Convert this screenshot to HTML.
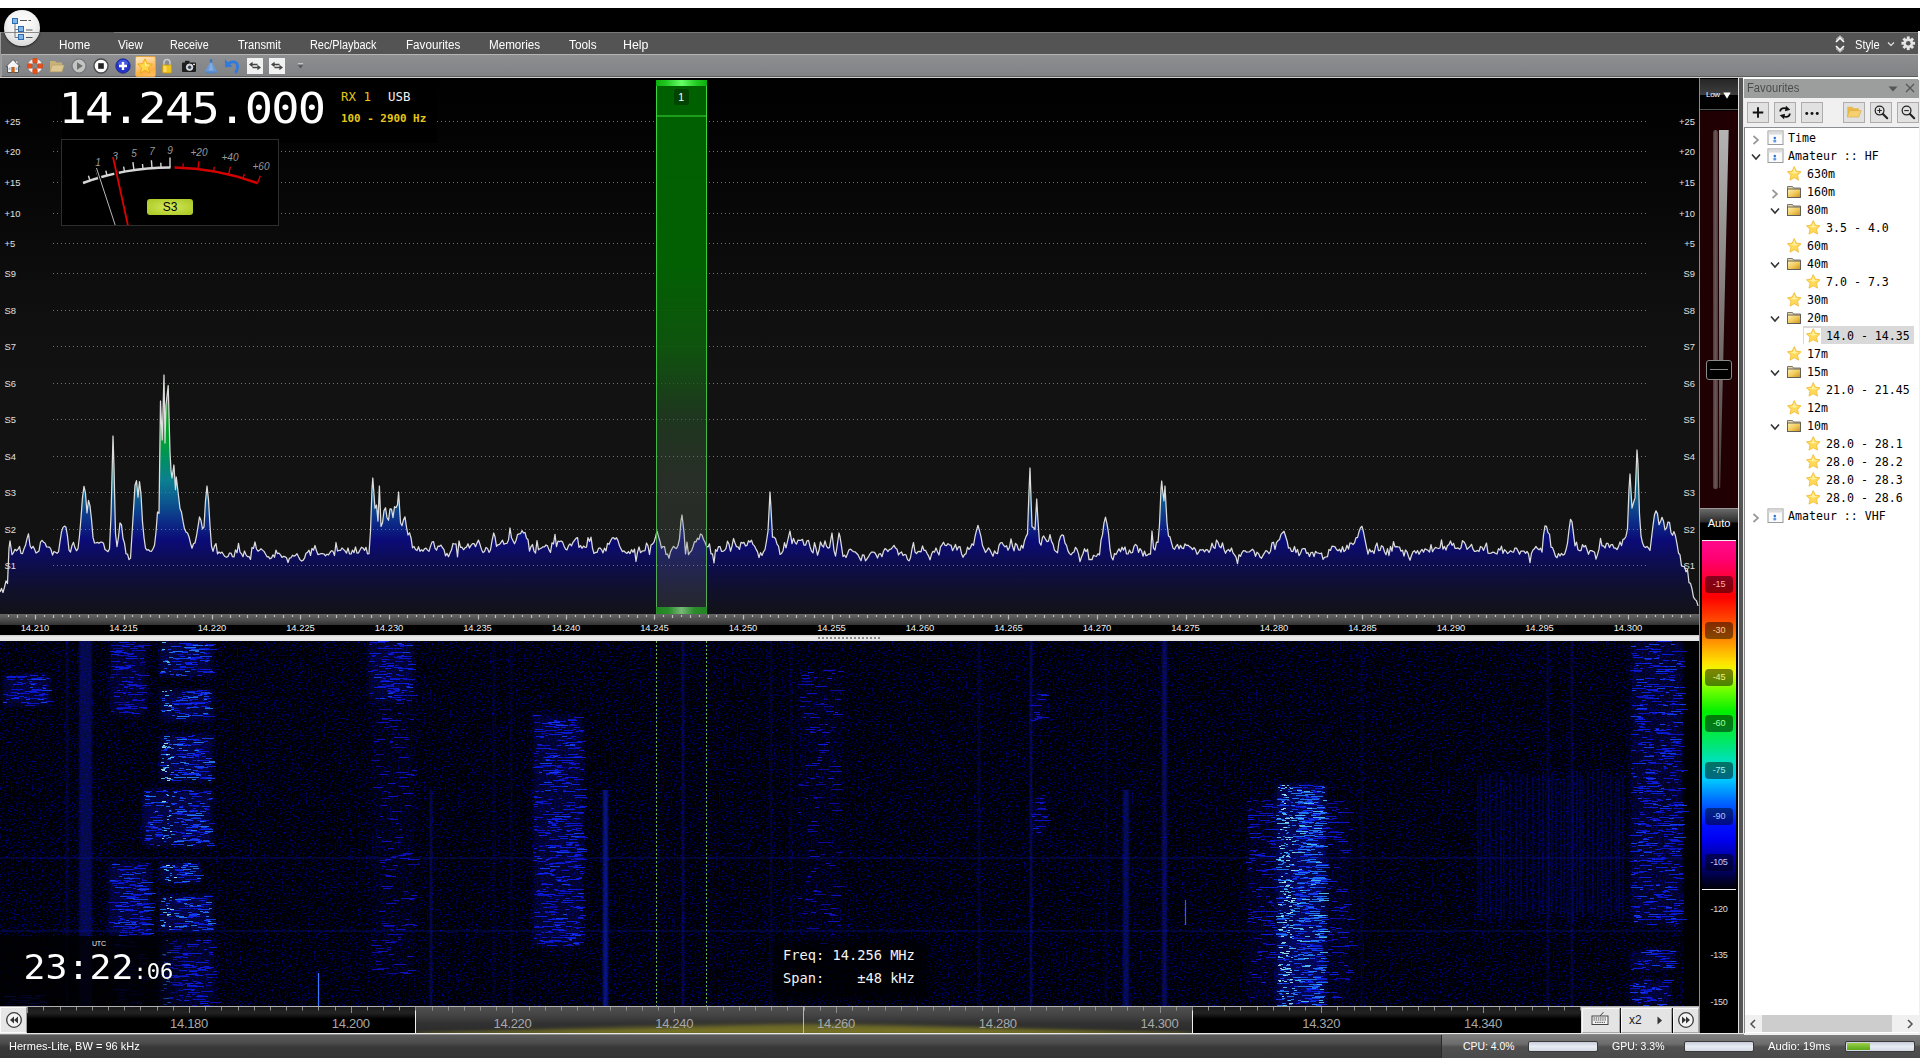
<!DOCTYPE html>
<html lang="en">
<head>
<meta charset="utf-8">
<title>SDR Console</title>
<style>
*{box-sizing:border-box;margin:0;padding:0}
html,body{width:1920px;height:1058px;overflow:hidden;background:#000}
body{position:relative;font-family:"Liberation Sans",sans-serif;font-size:12px;color:#fff}
.abs{position:absolute}
.mono{font-family:"DejaVu Sans Mono","Liberation Mono",monospace}
#topwhite{left:0;top:0;width:1920px;height:8px;background:#fff}
#menubar{left:0;top:32px;width:1918px;height:22px;background:#545454;border-top:1px solid #7a7a7a}
#menubar .hometab{left:36px;top:-1px;width:78px;height:22px;background:#545454}
#menubar span{position:absolute;top:5px;font-size:12px;line-height:14px;color:#fff;white-space:nowrap;transform-origin:0 0;transform:scaleX(.925)}
#leftedge{left:0;top:32px;width:1px;height:45px;background:#9a9a9a}
#toolbar{left:1px;top:54px;width:1917px;height:23px;background:linear-gradient(#8d8f91,#85878a 60%,#808284 100%);border-top:1px solid #b4b4b4;border-bottom:1px solid #5e5e5e;border-left:1px solid #a0a0a0}
#appbtn{left:4px;top:10px;width:36px;height:36px;border-radius:50%;background:radial-gradient(circle at 50% 35%,#fff 0%,#f2f2f2 45%,#c9c9c9 100%);box-shadow:0 1px 2px rgba(0,0,0,.6)}
.tbi{position:absolute;top:58px;width:16px;height:16px}
.gl{font-size:9.4px;color:#e0e0e0;line-height:12px;white-space:nowrap}
.rl{font-size:9.4px;color:#f0f0f0;width:60px;text-align:center;line-height:12px;white-space:nowrap}
.cbl{width:28px;height:17px;border-radius:4px;font-size:9px;line-height:17px;text-align:center;letter-spacing:-.2px}
.tr{font-size:11.6px;line-height:16px;color:#000;white-space:pre}
.nl{width:60px;text-align:center;font-size:13px;line-height:15px;color:#a8a8a8;white-space:nowrap;letter-spacing:-.3px}
</style>
</head>
<body>
<div id="topwhite" class="abs"></div>
<div id="menubar" class="abs">
<div class="abs hometab"></div>
<span style="left:59.1px;transform:scaleX(0.975)">Home</span>
<span style="left:117.8px;transform:scaleX(0.967)">View</span>
<span style="left:170.3px;transform:scaleX(0.892)">Receive</span>
<span style="left:237.7px;transform:scaleX(0.925)">Transmit</span>
<span style="left:310.0px;transform:scaleX(0.906)">Rec/Playback</span>
<span style="left:406.1px;transform:scaleX(0.971)">Favourites</span>
<span style="left:489.3px;transform:scaleX(0.970)">Memories</span>
<span style="left:568.7px;transform:scaleX(0.984)">Tools</span>
<span style="left:623.0px;transform:scaleX(1.031)">Help</span>
<span style="left:1855px">Style</span>
<svg class="abs" style="left:1833px;top:2px" width="14" height="18" viewBox="0 0 14 18"><path d="M3 7 L7 3 L11 7 M3 11 L7 15 L11 11" fill="none" stroke="#fff" stroke-width="1.6"/><path d="M3 4.5 L7 0.8 L11 4.5 M3 13.5 L7 17.2 L11 13.5" fill="none" stroke="#ddd" stroke-width="1"/></svg>
<svg class="abs" style="left:1887px;top:8px" width="8" height="6" viewBox="0 0 8 6"><path d="M1 1.5 L4 4.5 L7 1.5" fill="none" stroke="#e8e8e8" stroke-width="1.1"/></svg>
<svg class="abs" style="left:1901px;top:3px" width="14.5" height="14.5" viewBox="-8.5 -8.5 17 17"><g fill="#e6e6e6"><circle r="5.6"/><g id="gt"><rect x="-1.7" y="-8" width="3.4" height="16"/></g><use href="#gt" transform="rotate(45)"/><use href="#gt" transform="rotate(90)"/><use href="#gt" transform="rotate(135)"/></g><circle r="2.7" fill="#545454"/></svg>
</div>
<div id="leftedge" class="abs"></div>
<div class="abs" style="left:1918px;top:31px;width:2px;height:49px;background:#fff;z-index:3"></div>
<div class="abs" style="left:0;top:77px;width:1743px;height:1px;background:#cfcfcf;z-index:3"></div>
<div id="toolbar" class="abs"></div>
<div id="appbtn" class="abs">
<svg width="36" height="36" viewBox="0 0 36 36"><path d="M0.8 22.5 H35.2" stroke="#8a8a8a" stroke-width="1"/><path d="M11 13 V27.5 H15 M11 19.5 H15" fill="none" stroke="#777" stroke-width="1"/><g fill="#7fb6e6" stroke="#2a6db3" stroke-width="1"><rect x="8.5" y="8.5" width="5" height="5"/><rect x="14.5" y="16.5" width="5" height="5"/><rect x="14.5" y="24.5" width="5" height="5"/></g><path d="M16 10.5 H23 M24.5 10.5 H27 M22 20 H28.5 M22 27.5 H28.5" stroke="#555" stroke-width="1"/></svg>
</div>
<!-- toolbar icons -->
<svg class="tbi" style="left:5px" viewBox="0 0 16 16"><path d="M1 8.5 L8 1.5 L15 8.5 H13.5 V14.5 H2.5 V8.5 Z" fill="#f4f4f4" stroke="#555" stroke-width="1"/><rect x="6.3" y="9" width="3.4" height="5.5" fill="#c8641e"/><rect x="3.5" y="9.5" width="2" height="2.5" fill="#9cc3e8"/><rect x="10.5" y="9.5" width="2" height="2.5" fill="#9cc3e8"/><rect x="11" y="2.5" width="1.8" height="3" fill="#eee" stroke="#666" stroke-width=".5"/></svg>
<svg class="tbi" style="left:27px" viewBox="0 0 16 16"><circle cx="8" cy="8" r="5.3" fill="none" stroke="#f0f0f0" stroke-width="3.6"/><g fill="#e8501a" stroke="#c43c0c" stroke-width=".5"><rect x="5.7" y="0.3" width="4.6" height="4.8" rx="1"/><rect x="5.7" y="10.9" width="4.6" height="4.8" rx="1"/><rect x="0.3" y="5.7" width="4.8" height="4.6" rx="1"/><rect x="10.9" y="5.7" width="4.8" height="4.6" rx="1"/></g></svg>
<svg class="tbi" style="left:49px" viewBox="0 0 16 16"><path d="M1 3 H6 L7.5 4.5 H13 V13.5 H1 Z" fill="#c9b27a"/><path d="M3.2 7 H15.2 L13 13.8 H1 Z" fill="#dcc791" stroke="#b39c62" stroke-width=".6"/></svg>
<svg class="tbi" style="left:71px" viewBox="0 0 16 16"><circle cx="8" cy="8" r="7" fill="#c4c4c4" stroke="#737373" stroke-width="1.2"/><path d="M6 4.2 L11.8 8 L6 11.8 Z" fill="#6e6e6e"/></svg>
<svg class="tbi" style="left:93px" viewBox="0 0 16 16"><circle cx="8" cy="8" r="7" fill="#fdfdfd" stroke="#4a4a4a" stroke-width="1.4"/><rect x="5.2" y="5.2" width="5.6" height="5.6" fill="#222"/></svg>
<svg class="tbi" style="left:115px" viewBox="0 0 16 16"><circle cx="8" cy="8" r="7.2" fill="#2433c8" stroke="#1a2590" stroke-width=".8"/><ellipse cx="8" cy="5" rx="5" ry="3" fill="#5f74ee" opacity=".6"/><path d="M8 4 V12 M4 8 H12" stroke="#fff" stroke-width="2.4"/></svg>
<div class="abs" style="left:134.5px;top:55.5px;width:21px;height:21px;background:linear-gradient(160deg,#ffe9c4 0%,#ffd08a 35%,#fcb044 70%,#fdc060 100%);border:1px solid #e0a040;border-radius:2px"></div>
<svg class="tbi" style="left:137px" viewBox="0 0 16 16"><path d="M8 0.8 L10.2 5.6 L15.4 6.2 L11.5 9.8 L12.6 15 L8 12.3 L3.4 15 L4.5 9.8 L0.6 6.2 L5.8 5.6 Z" fill="#ffd84a" stroke="#e9a21c" stroke-width=".9"/><path d="M8 3 L9.4 6.5 L12.8 6.9 L8 8 Z" fill="#fff3a8"/></svg>
<svg class="tbi" style="left:159px" viewBox="0 0 16 16"><path d="M5 7 V4.5 A3 3 0 0 1 11 4.5 V7" fill="none" stroke="#c9c9c9" stroke-width="1.6"/><rect x="3.5" y="7" width="9" height="8" rx="1" fill="#f0c21c" stroke="#c99a10" stroke-width=".7"/><rect x="4.5" y="8" width="3" height="6" fill="#f9dc5c"/></svg>
<svg class="tbi" style="left:181px" viewBox="0 0 16 16"><rect x="1" y="4.5" width="14" height="9.5" rx="1" fill="#1c1c1c"/><rect x="4" y="2.8" width="4.5" height="2.2" fill="#1c1c1c"/><circle cx="8.6" cy="9.2" r="3.3" fill="#cfd6de" stroke="#eee" stroke-width=".7"/><circle cx="8.6" cy="9.2" r="1.7" fill="#3a4450"/><rect x="12" y="5.8" width="2" height="1.3" fill="#ddd"/></svg>
<svg class="tbi" style="left:203px" viewBox="0 0 16 16"><ellipse cx="8" cy="13.6" rx="6.3" ry="1.8" fill="#4f86cc"/><path d="M6.9 4.5 H9.1 L14.2 13.4 H1.8 Z" fill="#6a9ad6"/><path d="M7.4 5 H8.6 L10.5 12.5 H5.5 Z" fill="#8eb4e4" opacity=".7"/><rect x="6.8" y="1" width="2.4" height="3.8" rx="1.1" fill="#3f74be"/></svg>
<svg class="tbi" style="left:224px" viewBox="0 0 16 16"><path d="M4.5 5.8 C8 2.2 14 3.6 13.6 9.2 C13.4 12 12.2 13.9 11 15" fill="none" stroke="#2f7ae0" stroke-width="2.7" stroke-linecap="butt"/><path d="M0.8 1.2 L1.2 9.4 L8.6 8.6 Z" fill="#2f7ae0"/></svg>
<div class="abs" style="left:247px;top:58px;width:16px;height:16px;background:#f1f1f1"></div>
<svg class="tbi" style="left:247px" viewBox="0 0 16 16"><path d="M4 6.5 H10.5 M5.5 9.5 H12" fill="none" stroke="#444" stroke-width="1.5"/><path d="M2 6.5 L5.6 3.8 V9.2 Z M14 9.5 L10.4 6.8 V12.2 Z" fill="#444"/></svg>
<div class="abs" style="left:269px;top:58px;width:16px;height:16px;background:#f1f1f1"></div>
<svg class="tbi" style="left:269px" viewBox="0 0 16 16"><path d="M4 6.5 H10.5 M5.5 9.5 H12" fill="none" stroke="#444" stroke-width="1.5"/><path d="M2 6.5 L5.6 3.8 V9.2 Z M14 9.5 L10.4 6.8 V12.2 Z" fill="#444"/></svg>
<svg class="abs" style="left:297px;top:62px" width="7" height="8" viewBox="0 0 8 8"><path d="M1 1.3 H7" stroke="#d8d8d8" stroke-width="1"/><path d="M1 3.2 H7 L4 6.8 Z" fill="#555"/></svg>
<div id="spec" class="abs" style="left:0;top:77px;width:1699px;height:537px;background:linear-gradient(#000 0%,#060606 20%,#0e0e0e 40%,#121212 55%,#121212 100%);overflow:hidden">
<svg class="abs" style="left:0;top:0" width="1699" height="537" viewBox="0 0 1699 537">
<defs><linearGradient id="sg" gradientUnits="userSpaceOnUse" x1="0" y1="293" x2="0" y2="537">
<stop offset="0.0000" stop-color="#10c010"/>
<stop offset="0.1230" stop-color="#00aa10"/>
<stop offset="0.2869" stop-color="#00a030"/>
<stop offset="0.3607" stop-color="#009060"/>
<stop offset="0.4508" stop-color="#0c8090"/>
<stop offset="0.5328" stop-color="#0c5a90"/>
<stop offset="0.6148" stop-color="#0c3088"/>
<stop offset="0.6967" stop-color="#0b0b78"/>
<stop offset="0.7992" stop-color="#0d0d4c"/>
<stop offset="0.9016" stop-color="#10102c"/>
<stop offset="1.0000" stop-color="#121218"/>
</linearGradient></defs>
<polygon points="0,537 0.0,514.9 1.5,511.4 3.0,515.5 4.5,510.2 6.0,503.8 7.5,506.5 9.0,471.1 10.0,463.8 12.0,477.6 13.5,475.6 15.0,472.3 16.5,473.8 18.0,472.3 19.5,469.5 21.0,476.4 22.5,476.6 24.0,471.7 25.5,468.3 27.0,461.6 28.5,456.8 30.0,468.5 31.5,471.5 33.0,469.3 34.5,472.1 36.0,476.0 37.5,475.1 39.0,473.9 40.5,465.1 42.0,463.3 43.5,465.2 45.0,466.0 46.5,469.8 48.0,470.0 49.5,470.0 51.0,472.5 52.5,478.1 54.0,474.5 55.5,475.2 57.0,476.3 58.5,474.9 60.0,464.7 61.5,454.9 63.0,450.4 64.5,449.1 66.0,450.3 67.5,459.4 69.0,473.0 70.5,475.0 72.0,468.4 73.5,465.3 75.0,470.8 76.5,473.8 78.0,471.7 79.5,458.7 81.0,440.9 82.5,420.3 84.0,409.3 85.5,416.2 87.0,435.9 88.5,423.4 90.0,428.9 91.5,442.5 93.0,460.4 94.5,466.0 96.0,465.8 97.5,465.3 99.0,466.3 100.5,465.2 102.0,465.2 103.5,466.3 105.0,472.5 106.5,473.5 108.0,474.7 109.5,471.7 111.0,438.9 113.0,359.0 114.0,389.7 115.5,456.8 117.0,469.7 118.5,460.0 120.0,445.9 121.5,447.9 123.0,461.5 124.5,466.1 126.0,476.8 127.5,477.0 129.0,482.6 130.5,481.1 132.0,457.3 133.5,433.0 135.0,408.3 136.5,403.6 138.0,420.2 139.5,404.6 141.0,417.3 142.5,444.9 144.0,460.5 145.5,471.1 147.0,473.1 148.5,472.7 150.0,474.2 151.5,474.3 153.0,471.7 154.5,468.2 156.0,455.0 157.5,435.0 159.0,436.4 160.5,324.0 162.2,363.0 164.0,298.0 165.0,366.1 166.0,328.0 168.2,308.5 170.0,375.0 171.0,393.6 172.0,401.0 173.9,388.0 175.5,412.7 176.3,400.0 178.5,418.7 180.0,431.6 181.5,435.3 183.0,444.2 184.5,451.8 186.0,455.0 187.5,456.0 189.0,459.8 190.5,466.2 192.0,471.2 193.5,466.8 195.0,465.9 196.5,459.0 198.0,449.7 199.5,439.9 201.0,443.6 202.5,451.9 204.0,449.9 205.5,423.7 207.0,409.0 208.5,422.9 210.0,448.8 211.5,469.3 213.0,474.3 214.5,469.1 216.0,466.6 217.5,476.9 219.0,475.0 220.5,476.3 222.0,475.1 223.5,477.5 225.0,479.5 226.5,480.3 228.0,479.4 229.5,476.0 231.0,476.0 232.5,479.7 234.0,479.9 235.5,472.8 237.0,475.8 238.5,466.4 240.0,475.1 241.5,476.8 243.0,479.7 244.5,474.0 246.0,477.9 247.5,479.6 249.0,479.5 250.5,482.4 252.0,470.4 253.5,471.4 255.0,465.0 256.5,472.0 258.0,474.1 259.5,473.2 261.0,471.8 262.5,473.1 264.0,474.4 265.5,477.0 267.0,479.8 268.5,479.6 270.0,481.8 271.5,480.9 273.0,477.8 274.5,480.3 276.0,473.2 277.5,476.7 279.0,476.2 280.5,477.9 282.0,480.4 283.5,479.3 285.0,479.7 286.5,480.8 288.0,485.5 289.5,481.0 291.0,480.8 292.5,478.2 294.0,479.2 295.5,478.4 297.0,476.7 298.5,479.8 300.0,482.6 301.5,484.0 303.0,483.4 304.5,481.2 306.0,476.2 307.5,475.4 309.0,473.2 310.5,478.5 312.0,471.5 313.5,473.2 315.0,468.5 316.5,473.8 318.0,477.7 319.5,477.2 321.0,476.5 322.5,476.7 324.0,477.0 325.5,478.9 327.0,477.2 328.5,477.9 330.0,475.5 331.5,473.7 333.0,474.4 334.5,478.5 336.0,465.5 337.5,474.0 339.0,473.4 340.5,473.5 342.0,471.0 343.5,472.4 345.0,473.9 346.5,476.1 348.0,471.0 349.5,476.8 351.0,477.0 352.5,473.2 354.0,475.6 355.5,470.0 357.0,476.1 358.5,475.9 360.0,473.0 361.5,470.2 363.0,471.0 364.5,473.4 366.0,470.4 367.5,476.9 369.0,476.7 370.5,454.3 372.0,411.9 372.8,401.0 375.0,431.3 376.5,428.0 378.0,444.1 379.4,409.0 381.0,449.4 382.5,445.8 384.0,433.6 385.5,430.7 387.0,440.7 388.5,443.3 390.0,431.9 391.5,432.1 393.0,440.7 394.5,429.7 396.0,430.6 397.5,427.7 398.6,415.0 400.5,445.7 402.0,448.7 403.5,442.9 405.0,439.9 406.5,450.2 408.0,458.0 409.5,455.8 411.0,460.7 412.5,470.9 414.0,469.4 415.5,472.6 417.0,473.6 418.5,469.7 420.0,474.3 421.5,472.6 423.0,474.2 424.5,471.8 426.0,471.2 427.5,473.1 429.0,474.4 430.5,469.1 432.0,465.1 433.5,464.6 435.0,471.1 436.5,473.2 438.0,469.1 439.5,469.3 441.0,468.1 442.5,470.7 444.0,472.7 445.5,478.8 447.0,476.4 448.5,479.7 450.0,476.1 451.5,472.8 453.0,466.5 454.5,467.0 456.0,466.9 457.5,479.8 459.0,464.0 460.5,470.3 462.0,470.2 463.5,472.8 465.0,470.8 466.5,470.1 468.0,466.7 469.5,471.0 471.0,468.4 472.5,466.7 474.0,466.6 475.5,469.7 477.0,466.1 478.5,463.1 480.0,467.5 481.5,472.4 483.0,475.6 484.5,474.5 486.0,470.4 487.5,471.4 489.0,475.3 490.5,473.0 492.0,463.9 493.7,456.0 495.0,459.8 496.5,469.3 498.0,467.8 499.5,467.3 501.0,465.5 502.5,463.2 504.0,467.3 505.5,466.5 507.0,466.3 508.5,463.0 510.0,451.0 511.5,460.8 513.0,463.7 514.5,466.8 516.0,463.5 517.5,457.6 519.0,456.9 520.5,456.7 522.0,453.7 523.5,455.9 525.0,455.5 526.5,461.1 528.0,462.7 529.5,474.1 531.0,469.5 532.5,467.5 534.0,474.0 535.5,476.1 537.0,463.6 538.5,472.9 540.0,471.6 541.5,471.0 543.0,469.8 544.5,469.9 546.0,468.0 547.5,468.9 549.0,472.9 550.5,475.4 552.0,465.8 553.5,466.9 555.0,457.4 556.5,469.7 558.0,464.1 559.5,464.6 561.0,464.0 562.5,464.9 564.0,468.9 565.5,472.1 567.0,472.9 568.5,468.7 570.0,466.9 571.5,468.8 573.0,465.3 574.5,463.3 576.0,461.4 577.5,460.6 579.0,470.4 580.5,468.6 582.0,471.3 583.5,469.1 585.0,470.3 586.5,470.1 588.0,460.6 589.5,464.5 591.0,460.2 592.5,471.1 594.0,476.5 595.5,475.4 597.0,475.5 598.5,471.4 600.0,470.9 601.5,472.6 603.0,475.9 604.5,471.1 606.0,474.0 607.5,466.3 609.0,467.3 610.5,464.0 612.0,461.2 613.5,460.6 615.0,462.2 616.5,460.8 618.0,463.6 619.5,468.7 621.0,471.9 622.5,474.6 624.0,473.8 625.5,475.5 627.0,476.4 628.5,474.5 630.0,476.6 631.5,472.6 633.0,475.3 634.5,472.1 636.0,484.5 637.5,475.3 639.0,469.9 640.5,475.7 642.0,474.1 643.5,473.8 645.0,473.6 646.5,466.0 648.0,468.8 649.5,477.5 651.0,468.0 652.5,467.1 654.0,465.2 655.5,460.1 657.0,454.0 658.5,459.4 660.0,464.4 661.5,471.2 663.0,469.5 664.5,469.6 666.0,477.5 667.5,477.0 669.0,481.2 670.5,474.7 672.0,471.8 673.5,469.3 675.0,470.9 676.5,471.5 678.0,468.5 679.5,461.9 681.0,443.6 682.0,438.0 684.0,455.3 685.5,476.9 687.0,465.1 688.5,477.6 690.0,475.2 691.5,473.9 693.0,469.8 694.5,464.7 696.0,464.8 697.5,461.2 699.0,462.4 700.5,456.9 702.0,457.9 703.5,462.5 705.0,465.2 706.5,469.4 708.0,469.9 709.5,466.8 711.0,476.9 712.5,476.8 714.0,486.0 715.5,472.7 717.0,474.3 718.5,469.5 720.0,469.5 721.5,474.3 723.0,474.3 724.5,473.5 726.0,471.3 727.5,464.2 729.0,467.3 730.5,474.2 732.0,469.1 733.5,461.5 735.0,466.0 736.5,469.7 738.0,469.9 739.5,472.4 741.0,465.3 742.5,466.1 744.0,465.4 745.5,469.0 747.0,468.4 748.5,463.7 750.0,465.2 751.5,463.2 753.0,467.6 754.5,468.9 756.0,472.1 757.5,474.9 759.0,480.6 760.5,475.6 762.0,478.4 763.5,474.8 765.0,472.5 766.5,464.0 768.0,454.1 770.0,415.0 771.0,431.3 772.5,460.1 774.0,460.1 775.5,461.7 777.0,467.2 778.5,469.1 780.0,477.4 781.5,476.4 783.0,474.0 784.5,465.7 786.0,470.8 787.5,464.3 789.0,457.9 790.0,454.0 792.0,466.7 793.5,461.4 795.0,465.4 796.5,467.1 798.0,463.1 799.5,463.4 801.0,463.3 802.5,462.4 804.0,468.2 805.5,468.2 807.0,463.8 808.5,463.4 810.0,469.7 811.5,474.1 813.0,475.9 814.5,465.6 816.0,471.4 817.5,478.2 819.0,473.3 820.5,464.9 822.0,468.4 823.5,470.1 825.0,463.9 826.5,469.2 828.0,471.2 829.5,470.7 831.0,461.3 832.0,456.0 834.0,473.6 835.5,479.2 837.0,469.9 839.0,456.0 840.0,459.7 841.5,469.4 843.0,479.5 844.5,478.1 846.0,480.5 847.5,476.8 849.0,472.8 850.5,472.1 852.0,473.5 853.5,474.7 855.0,474.8 856.5,476.3 858.0,477.8 859.5,480.9 861.0,483.8 862.5,477.8 864.0,478.1 865.5,483.9 867.0,481.8 868.5,479.7 870.0,476.8 871.5,475.1 873.0,475.2 874.5,475.3 876.0,477.7 877.5,481.0 879.0,477.0 880.5,476.7 882.0,479.7 883.5,474.3 885.0,471.6 886.5,472.5 888.0,474.5 889.5,472.3 891.0,472.2 892.5,470.3 894.0,468.3 895.5,471.1 897.0,472.2 898.5,478.0 900.0,475.9 901.5,474.9 903.0,478.6 904.5,477.5 906.0,477.9 907.5,482.6 909.0,483.9 910.5,480.7 912.0,472.0 913.5,465.5 915.0,475.0 916.5,476.6 918.0,474.7 919.5,474.3 921.0,474.8 922.5,468.9 924.0,473.3 925.5,473.3 927.0,476.3 928.5,478.9 930.0,482.8 931.5,477.3 933.0,474.3 934.5,475.1 936.0,471.0 937.5,474.9 939.0,478.0 940.5,469.9 942.0,467.9 943.5,465.2 945.0,468.3 946.5,468.6 948.0,466.6 949.5,467.9 951.0,468.1 952.5,473.7 954.0,470.8 955.5,467.4 957.0,473.1 958.5,469.8 960.0,469.6 961.5,476.7 963.0,480.3 964.5,477.6 966.0,476.7 967.5,470.1 969.0,472.4 970.5,470.6 972.0,466.8 973.5,468.4 975.0,459.7 976.5,453.4 978.0,448.3 979.5,453.8 981.0,459.7 982.5,468.5 984.0,471.8 985.5,475.5 987.0,473.4 988.5,470.9 990.0,472.9 991.5,476.3 993.0,479.2 994.5,473.8 996.0,476.2 997.5,476.7 999.0,468.4 1000.5,465.9 1002.0,465.5 1003.5,468.2 1005.0,469.9 1006.5,468.6 1008.0,473.2 1009.5,470.3 1011.0,461.8 1012.5,469.0 1014.0,473.9 1015.5,466.3 1017.0,468.0 1018.5,472.9 1020.0,473.2 1021.5,468.3 1023.0,471.1 1024.5,463.7 1026.0,459.6 1027.5,456.9 1029.0,413.9 1030.0,391.0 1032.0,449.7 1033.5,450.6 1035.0,452.6 1036.7,422.0 1038.0,444.1 1039.5,465.5 1041.0,468.2 1042.5,460.3 1043.7,459.0 1045.5,462.2 1047.0,464.6 1048.5,464.2 1050.0,457.6 1051.5,464.4 1053.0,467.1 1054.5,473.1 1056.0,474.6 1057.5,475.8 1059.0,464.5 1060.5,459.7 1062.0,457.8 1063.5,458.6 1065.0,466.2 1066.5,468.4 1068.0,473.9 1069.5,476.6 1071.0,477.9 1072.5,475.8 1074.0,475.0 1075.5,470.3 1077.0,472.4 1078.5,476.9 1080.0,484.6 1081.5,480.0 1083.0,476.7 1084.5,471.7 1086.0,474.7 1087.5,472.2 1089.0,482.6 1090.5,482.3 1092.0,482.7 1093.5,478.3 1095.0,479.0 1096.5,479.3 1098.0,476.7 1099.5,477.9 1101.0,463.1 1102.5,457.7 1104.0,445.9 1105.5,440.2 1107.0,446.9 1108.5,456.2 1110.0,472.2 1111.5,480.2 1113.0,482.9 1114.5,476.5 1116.0,477.5 1117.5,474.4 1119.0,471.9 1120.5,474.8 1122.0,470.2 1123.5,473.1 1125.0,470.0 1126.5,476.8 1128.0,477.0 1129.5,473.0 1131.0,476.0 1132.5,475.5 1134.0,469.4 1135.5,467.4 1137.0,468.9 1138.5,475.4 1140.0,471.6 1141.5,473.8 1143.0,479.2 1144.5,474.2 1146.0,478.8 1147.5,478.1 1149.0,476.8 1150.5,477.2 1152.0,454.0 1153.5,471.1 1155.0,473.0 1156.5,465.2 1158.0,465.3 1159.5,447.5 1161.0,411.9 1161.7,404.0 1162.5,412.8 1164.0,423.8 1165.0,409.0 1167.0,446.0 1168.5,459.0 1170.0,459.9 1171.5,465.8 1173.0,471.1 1174.5,472.4 1176.0,469.3 1177.5,467.5 1179.0,471.9 1180.5,468.3 1182.0,471.1 1183.5,471.6 1185.0,466.8 1186.5,468.5 1188.0,468.2 1189.5,469.6 1191.0,470.5 1192.5,472.5 1194.0,470.6 1195.5,472.6 1197.0,477.3 1198.5,475.5 1200.0,472.6 1201.5,473.2 1203.0,472.5 1204.5,474.9 1206.0,472.7 1207.5,472.9 1209.0,475.5 1210.5,472.5 1212.0,466.1 1213.5,470.2 1215.0,471.4 1216.5,463.0 1218.0,465.3 1219.5,469.6 1221.0,470.8 1222.5,465.8 1224.0,472.4 1225.5,476.3 1227.0,473.4 1228.5,472.4 1230.0,474.6 1231.5,471.0 1233.0,475.9 1234.5,477.9 1236.0,480.2 1237.5,486.6 1239.0,477.6 1240.5,479.3 1242.0,475.6 1243.5,473.6 1245.0,473.8 1246.5,475.2 1248.0,475.0 1249.5,474.8 1251.0,473.5 1252.5,472.2 1254.0,474.2 1255.5,479.3 1257.0,475.2 1258.5,476.6 1260.0,480.1 1261.5,481.3 1263.0,478.4 1264.5,475.9 1266.0,473.5 1267.5,474.5 1269.0,476.7 1270.5,474.2 1272.0,465.9 1273.5,465.2 1275.0,472.3 1276.5,465.7 1278.0,463.7 1279.5,462.6 1281.0,457.4 1282.5,455.8 1284.0,454.3 1285.5,459.0 1287.0,463.7 1288.5,471.0 1290.0,470.8 1291.5,474.5 1293.0,474.3 1294.5,469.5 1296.0,475.6 1297.5,472.4 1299.0,478.7 1300.5,476.3 1302.0,472.1 1303.5,471.5 1305.0,471.5 1306.5,476.3 1308.0,475.7 1309.5,479.5 1311.0,475.5 1312.5,475.3 1314.0,479.6 1315.5,474.3 1317.0,475.9 1318.5,476.0 1320.0,476.7 1321.5,476.0 1323.0,482.4 1324.5,480.4 1326.0,480.0 1327.5,479.6 1329.0,472.4 1330.5,473.4 1332.0,469.2 1333.5,469.3 1335.0,469.9 1336.5,472.5 1338.0,473.8 1339.5,472.1 1341.0,475.1 1342.5,469.7 1344.0,474.6 1345.5,473.0 1347.0,468.2 1348.5,472.0 1350.0,466.0 1351.5,466.2 1353.0,467.5 1354.5,465.8 1356.0,460.6 1357.5,460.6 1359.0,454.8 1360.5,450.8 1362.0,449.3 1363.5,455.0 1365.0,462.6 1366.5,470.2 1368.0,477.1 1369.5,472.1 1371.0,474.9 1372.5,473.7 1374.0,476.5 1375.5,469.6 1377.0,466.0 1378.5,473.6 1380.0,473.5 1381.5,468.7 1383.0,469.8 1384.5,474.7 1386.0,477.8 1387.5,471.7 1389.0,478.5 1390.5,469.4 1392.0,474.2 1393.5,464.6 1395.0,469.8 1396.5,469.6 1398.0,469.9 1399.5,470.0 1401.0,474.2 1402.5,473.2 1404.0,479.2 1405.5,473.0 1407.0,474.8 1408.5,479.5 1410.0,483.2 1411.5,478.5 1413.0,474.7 1414.5,473.7 1416.0,476.2 1417.5,473.5 1419.0,477.3 1420.5,474.4 1422.0,472.4 1423.5,475.2 1425.0,471.8 1426.5,472.6 1428.0,473.3 1429.5,475.0 1431.0,467.7 1432.5,474.7 1434.0,472.2 1435.5,470.4 1437.0,471.0 1438.5,471.5 1440.0,471.0 1441.5,462.8 1443.0,472.1 1444.5,469.4 1446.0,473.1 1447.5,468.5 1449.0,467.6 1450.5,464.0 1452.0,468.3 1453.5,466.3 1455.0,471.3 1456.5,471.3 1458.0,470.9 1459.5,472.2 1461.0,470.7 1462.5,463.7 1464.0,464.9 1465.5,467.5 1467.0,472.3 1468.5,470.9 1470.0,469.5 1471.5,467.3 1473.0,472.1 1474.5,474.4 1476.0,474.3 1477.5,473.4 1479.0,474.5 1480.5,469.5 1482.0,470.2 1483.5,473.4 1485.0,469.8 1486.5,466.1 1488.0,476.1 1489.5,476.4 1491.0,476.1 1492.5,475.2 1494.0,475.3 1495.5,476.5 1497.0,477.0 1498.5,471.7 1500.0,473.1 1501.5,469.2 1503.0,476.3 1504.5,472.7 1506.0,474.1 1507.5,476.5 1509.0,475.4 1510.5,473.8 1512.0,474.8 1513.5,475.2 1515.0,471.0 1516.5,471.1 1518.0,474.0 1519.5,477.3 1521.0,474.1 1522.5,474.0 1524.0,474.2 1525.5,476.3 1527.0,474.4 1528.5,476.9 1530.0,485.7 1531.5,476.2 1533.0,472.9 1534.5,471.7 1536.0,469.4 1537.5,471.6 1539.0,472.8 1540.5,471.1 1542.0,475.1 1543.5,458.1 1545.0,448.9 1546.5,449.3 1548.0,455.6 1549.5,457.1 1551.0,470.1 1552.5,470.6 1554.0,474.5 1555.5,479.2 1557.0,480.7 1558.5,476.5 1560.0,479.0 1561.5,476.4 1563.0,478.1 1564.5,477.2 1566.0,472.8 1567.5,466.1 1569.0,452.5 1570.5,442.3 1572.0,444.9 1573.5,456.7 1575.0,468.8 1576.5,465.2 1578.0,472.8 1579.5,473.7 1581.0,473.6 1582.5,467.7 1584.0,470.0 1585.5,468.4 1587.0,472.8 1588.5,477.3 1590.0,473.6 1591.5,473.7 1593.0,474.3 1594.5,475.2 1596.0,482.1 1597.5,477.6 1599.0,472.2 1600.5,461.4 1602.0,468.9 1603.5,468.9 1605.0,471.0 1606.5,466.3 1608.0,466.4 1609.5,470.5 1611.0,467.7 1612.5,467.5 1614.0,471.0 1615.5,471.0 1617.0,472.6 1618.5,469.6 1620.0,464.9 1621.5,468.6 1623.0,462.4 1624.5,461.8 1626.0,459.2 1627.5,451.7 1629.0,411.8 1630.0,397.0 1632.0,431.2 1633.5,425.7 1635.0,420.9 1637.0,373.0 1638.0,387.9 1639.5,437.4 1641.0,459.0 1642.5,465.8 1644.0,469.5 1645.5,470.5 1647.0,469.4 1648.5,471.2 1650.0,473.5 1651.5,461.2 1653.0,448.5 1654.5,437.7 1656.0,433.8 1657.5,436.8 1659.0,447.7 1660.5,444.6 1662.0,440.3 1663.5,444.2 1665.0,452.9 1666.5,451.2 1668.0,445.0 1669.5,445.3 1671.0,455.7 1672.5,458.3 1674.0,454.6 1675.5,459.0 1677.0,466.8 1678.5,476.0 1680.0,477.9 1681.5,488.8 1683.0,489.3 1684.5,489.6 1686.0,494.8 1687.5,492.6 1689.0,505.7 1690.5,506.3 1692.0,511.8 1693.5,520.2 1695.0,522.4 1696.5,523.9 1698.0,528.9 1698.0,537" fill="url(#sg)"/>
<line x1="53" x2="1646" y1="44.5" y2="44.5" stroke="#707070" stroke-width="1" stroke-dasharray="1 3" shape-rendering="crispEdges"/>
<line x1="53" x2="1646" y1="74.5" y2="74.5" stroke="#707070" stroke-width="1" stroke-dasharray="1 3" shape-rendering="crispEdges"/>
<line x1="53" x2="1646" y1="105.5" y2="105.5" stroke="#707070" stroke-width="1" stroke-dasharray="1 3" shape-rendering="crispEdges"/>
<line x1="53" x2="1646" y1="136.5" y2="136.5" stroke="#707070" stroke-width="1" stroke-dasharray="1 3" shape-rendering="crispEdges"/>
<line x1="53" x2="1646" y1="166.5" y2="166.5" stroke="#707070" stroke-width="1" stroke-dasharray="1 3" shape-rendering="crispEdges"/>
<line x1="53" x2="1646" y1="196.5" y2="196.5" stroke="#707070" stroke-width="1" stroke-dasharray="1 3" shape-rendering="crispEdges"/>
<line x1="53" x2="1646" y1="233.5" y2="233.5" stroke="#707070" stroke-width="1" stroke-dasharray="1 3" shape-rendering="crispEdges"/>
<line x1="53" x2="1646" y1="269.5" y2="269.5" stroke="#707070" stroke-width="1" stroke-dasharray="1 3" shape-rendering="crispEdges"/>
<line x1="53" x2="1646" y1="306.5" y2="306.5" stroke="#707070" stroke-width="1" stroke-dasharray="1 3" shape-rendering="crispEdges"/>
<line x1="53" x2="1646" y1="342.5" y2="342.5" stroke="#707070" stroke-width="1" stroke-dasharray="1 3" shape-rendering="crispEdges"/>
<line x1="53" x2="1646" y1="379.5" y2="379.5" stroke="#707070" stroke-width="1" stroke-dasharray="1 3" shape-rendering="crispEdges"/>
<line x1="53" x2="1646" y1="415.5" y2="415.5" stroke="#707070" stroke-width="1" stroke-dasharray="1 3" shape-rendering="crispEdges"/>
<line x1="53" x2="1646" y1="452.5" y2="452.5" stroke="#707070" stroke-width="1" stroke-dasharray="1 3" shape-rendering="crispEdges"/>
<line x1="53" x2="1646" y1="488.5" y2="488.5" stroke="#707070" stroke-width="1" stroke-dasharray="1 3" shape-rendering="crispEdges"/>
<polyline points="0.0,514.9 1.5,511.4 3.0,515.5 4.5,510.2 6.0,503.8 7.5,506.5 9.0,471.1 10.0,463.8 12.0,477.6 13.5,475.6 15.0,472.3 16.5,473.8 18.0,472.3 19.5,469.5 21.0,476.4 22.5,476.6 24.0,471.7 25.5,468.3 27.0,461.6 28.5,456.8 30.0,468.5 31.5,471.5 33.0,469.3 34.5,472.1 36.0,476.0 37.5,475.1 39.0,473.9 40.5,465.1 42.0,463.3 43.5,465.2 45.0,466.0 46.5,469.8 48.0,470.0 49.5,470.0 51.0,472.5 52.5,478.1 54.0,474.5 55.5,475.2 57.0,476.3 58.5,474.9 60.0,464.7 61.5,454.9 63.0,450.4 64.5,449.1 66.0,450.3 67.5,459.4 69.0,473.0 70.5,475.0 72.0,468.4 73.5,465.3 75.0,470.8 76.5,473.8 78.0,471.7 79.5,458.7 81.0,440.9 82.5,420.3 84.0,409.3 85.5,416.2 87.0,435.9 88.5,423.4 90.0,428.9 91.5,442.5 93.0,460.4 94.5,466.0 96.0,465.8 97.5,465.3 99.0,466.3 100.5,465.2 102.0,465.2 103.5,466.3 105.0,472.5 106.5,473.5 108.0,474.7 109.5,471.7 111.0,438.9 113.0,359.0 114.0,389.7 115.5,456.8 117.0,469.7 118.5,460.0 120.0,445.9 121.5,447.9 123.0,461.5 124.5,466.1 126.0,476.8 127.5,477.0 129.0,482.6 130.5,481.1 132.0,457.3 133.5,433.0 135.0,408.3 136.5,403.6 138.0,420.2 139.5,404.6 141.0,417.3 142.5,444.9 144.0,460.5 145.5,471.1 147.0,473.1 148.5,472.7 150.0,474.2 151.5,474.3 153.0,471.7 154.5,468.2 156.0,455.0 157.5,435.0 159.0,436.4 160.5,324.0 162.2,363.0 164.0,298.0 165.0,366.1 166.0,328.0 168.2,308.5 170.0,375.0 171.0,393.6 172.0,401.0 173.9,388.0 175.5,412.7 176.3,400.0 178.5,418.7 180.0,431.6 181.5,435.3 183.0,444.2 184.5,451.8 186.0,455.0 187.5,456.0 189.0,459.8 190.5,466.2 192.0,471.2 193.5,466.8 195.0,465.9 196.5,459.0 198.0,449.7 199.5,439.9 201.0,443.6 202.5,451.9 204.0,449.9 205.5,423.7 207.0,409.0 208.5,422.9 210.0,448.8 211.5,469.3 213.0,474.3 214.5,469.1 216.0,466.6 217.5,476.9 219.0,475.0 220.5,476.3 222.0,475.1 223.5,477.5 225.0,479.5 226.5,480.3 228.0,479.4 229.5,476.0 231.0,476.0 232.5,479.7 234.0,479.9 235.5,472.8 237.0,475.8 238.5,466.4 240.0,475.1 241.5,476.8 243.0,479.7 244.5,474.0 246.0,477.9 247.5,479.6 249.0,479.5 250.5,482.4 252.0,470.4 253.5,471.4 255.0,465.0 256.5,472.0 258.0,474.1 259.5,473.2 261.0,471.8 262.5,473.1 264.0,474.4 265.5,477.0 267.0,479.8 268.5,479.6 270.0,481.8 271.5,480.9 273.0,477.8 274.5,480.3 276.0,473.2 277.5,476.7 279.0,476.2 280.5,477.9 282.0,480.4 283.5,479.3 285.0,479.7 286.5,480.8 288.0,485.5 289.5,481.0 291.0,480.8 292.5,478.2 294.0,479.2 295.5,478.4 297.0,476.7 298.5,479.8 300.0,482.6 301.5,484.0 303.0,483.4 304.5,481.2 306.0,476.2 307.5,475.4 309.0,473.2 310.5,478.5 312.0,471.5 313.5,473.2 315.0,468.5 316.5,473.8 318.0,477.7 319.5,477.2 321.0,476.5 322.5,476.7 324.0,477.0 325.5,478.9 327.0,477.2 328.5,477.9 330.0,475.5 331.5,473.7 333.0,474.4 334.5,478.5 336.0,465.5 337.5,474.0 339.0,473.4 340.5,473.5 342.0,471.0 343.5,472.4 345.0,473.9 346.5,476.1 348.0,471.0 349.5,476.8 351.0,477.0 352.5,473.2 354.0,475.6 355.5,470.0 357.0,476.1 358.5,475.9 360.0,473.0 361.5,470.2 363.0,471.0 364.5,473.4 366.0,470.4 367.5,476.9 369.0,476.7 370.5,454.3 372.0,411.9 372.8,401.0 375.0,431.3 376.5,428.0 378.0,444.1 379.4,409.0 381.0,449.4 382.5,445.8 384.0,433.6 385.5,430.7 387.0,440.7 388.5,443.3 390.0,431.9 391.5,432.1 393.0,440.7 394.5,429.7 396.0,430.6 397.5,427.7 398.6,415.0 400.5,445.7 402.0,448.7 403.5,442.9 405.0,439.9 406.5,450.2 408.0,458.0 409.5,455.8 411.0,460.7 412.5,470.9 414.0,469.4 415.5,472.6 417.0,473.6 418.5,469.7 420.0,474.3 421.5,472.6 423.0,474.2 424.5,471.8 426.0,471.2 427.5,473.1 429.0,474.4 430.5,469.1 432.0,465.1 433.5,464.6 435.0,471.1 436.5,473.2 438.0,469.1 439.5,469.3 441.0,468.1 442.5,470.7 444.0,472.7 445.5,478.8 447.0,476.4 448.5,479.7 450.0,476.1 451.5,472.8 453.0,466.5 454.5,467.0 456.0,466.9 457.5,479.8 459.0,464.0 460.5,470.3 462.0,470.2 463.5,472.8 465.0,470.8 466.5,470.1 468.0,466.7 469.5,471.0 471.0,468.4 472.5,466.7 474.0,466.6 475.5,469.7 477.0,466.1 478.5,463.1 480.0,467.5 481.5,472.4 483.0,475.6 484.5,474.5 486.0,470.4 487.5,471.4 489.0,475.3 490.5,473.0 492.0,463.9 493.7,456.0 495.0,459.8 496.5,469.3 498.0,467.8 499.5,467.3 501.0,465.5 502.5,463.2 504.0,467.3 505.5,466.5 507.0,466.3 508.5,463.0 510.0,451.0 511.5,460.8 513.0,463.7 514.5,466.8 516.0,463.5 517.5,457.6 519.0,456.9 520.5,456.7 522.0,453.7 523.5,455.9 525.0,455.5 526.5,461.1 528.0,462.7 529.5,474.1 531.0,469.5 532.5,467.5 534.0,474.0 535.5,476.1 537.0,463.6 538.5,472.9 540.0,471.6 541.5,471.0 543.0,469.8 544.5,469.9 546.0,468.0 547.5,468.9 549.0,472.9 550.5,475.4 552.0,465.8 553.5,466.9 555.0,457.4 556.5,469.7 558.0,464.1 559.5,464.6 561.0,464.0 562.5,464.9 564.0,468.9 565.5,472.1 567.0,472.9 568.5,468.7 570.0,466.9 571.5,468.8 573.0,465.3 574.5,463.3 576.0,461.4 577.5,460.6 579.0,470.4 580.5,468.6 582.0,471.3 583.5,469.1 585.0,470.3 586.5,470.1 588.0,460.6 589.5,464.5 591.0,460.2 592.5,471.1 594.0,476.5 595.5,475.4 597.0,475.5 598.5,471.4 600.0,470.9 601.5,472.6 603.0,475.9 604.5,471.1 606.0,474.0 607.5,466.3 609.0,467.3 610.5,464.0 612.0,461.2 613.5,460.6 615.0,462.2 616.5,460.8 618.0,463.6 619.5,468.7 621.0,471.9 622.5,474.6 624.0,473.8 625.5,475.5 627.0,476.4 628.5,474.5 630.0,476.6 631.5,472.6 633.0,475.3 634.5,472.1 636.0,484.5 637.5,475.3 639.0,469.9 640.5,475.7 642.0,474.1 643.5,473.8 645.0,473.6 646.5,466.0 648.0,468.8 649.5,477.5 651.0,468.0 652.5,467.1 654.0,465.2 655.5,460.1 657.0,454.0 658.5,459.4 660.0,464.4 661.5,471.2 663.0,469.5 664.5,469.6 666.0,477.5 667.5,477.0 669.0,481.2 670.5,474.7 672.0,471.8 673.5,469.3 675.0,470.9 676.5,471.5 678.0,468.5 679.5,461.9 681.0,443.6 682.0,438.0 684.0,455.3 685.5,476.9 687.0,465.1 688.5,477.6 690.0,475.2 691.5,473.9 693.0,469.8 694.5,464.7 696.0,464.8 697.5,461.2 699.0,462.4 700.5,456.9 702.0,457.9 703.5,462.5 705.0,465.2 706.5,469.4 708.0,469.9 709.5,466.8 711.0,476.9 712.5,476.8 714.0,486.0 715.5,472.7 717.0,474.3 718.5,469.5 720.0,469.5 721.5,474.3 723.0,474.3 724.5,473.5 726.0,471.3 727.5,464.2 729.0,467.3 730.5,474.2 732.0,469.1 733.5,461.5 735.0,466.0 736.5,469.7 738.0,469.9 739.5,472.4 741.0,465.3 742.5,466.1 744.0,465.4 745.5,469.0 747.0,468.4 748.5,463.7 750.0,465.2 751.5,463.2 753.0,467.6 754.5,468.9 756.0,472.1 757.5,474.9 759.0,480.6 760.5,475.6 762.0,478.4 763.5,474.8 765.0,472.5 766.5,464.0 768.0,454.1 770.0,415.0 771.0,431.3 772.5,460.1 774.0,460.1 775.5,461.7 777.0,467.2 778.5,469.1 780.0,477.4 781.5,476.4 783.0,474.0 784.5,465.7 786.0,470.8 787.5,464.3 789.0,457.9 790.0,454.0 792.0,466.7 793.5,461.4 795.0,465.4 796.5,467.1 798.0,463.1 799.5,463.4 801.0,463.3 802.5,462.4 804.0,468.2 805.5,468.2 807.0,463.8 808.5,463.4 810.0,469.7 811.5,474.1 813.0,475.9 814.5,465.6 816.0,471.4 817.5,478.2 819.0,473.3 820.5,464.9 822.0,468.4 823.5,470.1 825.0,463.9 826.5,469.2 828.0,471.2 829.5,470.7 831.0,461.3 832.0,456.0 834.0,473.6 835.5,479.2 837.0,469.9 839.0,456.0 840.0,459.7 841.5,469.4 843.0,479.5 844.5,478.1 846.0,480.5 847.5,476.8 849.0,472.8 850.5,472.1 852.0,473.5 853.5,474.7 855.0,474.8 856.5,476.3 858.0,477.8 859.5,480.9 861.0,483.8 862.5,477.8 864.0,478.1 865.5,483.9 867.0,481.8 868.5,479.7 870.0,476.8 871.5,475.1 873.0,475.2 874.5,475.3 876.0,477.7 877.5,481.0 879.0,477.0 880.5,476.7 882.0,479.7 883.5,474.3 885.0,471.6 886.5,472.5 888.0,474.5 889.5,472.3 891.0,472.2 892.5,470.3 894.0,468.3 895.5,471.1 897.0,472.2 898.5,478.0 900.0,475.9 901.5,474.9 903.0,478.6 904.5,477.5 906.0,477.9 907.5,482.6 909.0,483.9 910.5,480.7 912.0,472.0 913.5,465.5 915.0,475.0 916.5,476.6 918.0,474.7 919.5,474.3 921.0,474.8 922.5,468.9 924.0,473.3 925.5,473.3 927.0,476.3 928.5,478.9 930.0,482.8 931.5,477.3 933.0,474.3 934.5,475.1 936.0,471.0 937.5,474.9 939.0,478.0 940.5,469.9 942.0,467.9 943.5,465.2 945.0,468.3 946.5,468.6 948.0,466.6 949.5,467.9 951.0,468.1 952.5,473.7 954.0,470.8 955.5,467.4 957.0,473.1 958.5,469.8 960.0,469.6 961.5,476.7 963.0,480.3 964.5,477.6 966.0,476.7 967.5,470.1 969.0,472.4 970.5,470.6 972.0,466.8 973.5,468.4 975.0,459.7 976.5,453.4 978.0,448.3 979.5,453.8 981.0,459.7 982.5,468.5 984.0,471.8 985.5,475.5 987.0,473.4 988.5,470.9 990.0,472.9 991.5,476.3 993.0,479.2 994.5,473.8 996.0,476.2 997.5,476.7 999.0,468.4 1000.5,465.9 1002.0,465.5 1003.5,468.2 1005.0,469.9 1006.5,468.6 1008.0,473.2 1009.5,470.3 1011.0,461.8 1012.5,469.0 1014.0,473.9 1015.5,466.3 1017.0,468.0 1018.5,472.9 1020.0,473.2 1021.5,468.3 1023.0,471.1 1024.5,463.7 1026.0,459.6 1027.5,456.9 1029.0,413.9 1030.0,391.0 1032.0,449.7 1033.5,450.6 1035.0,452.6 1036.7,422.0 1038.0,444.1 1039.5,465.5 1041.0,468.2 1042.5,460.3 1043.7,459.0 1045.5,462.2 1047.0,464.6 1048.5,464.2 1050.0,457.6 1051.5,464.4 1053.0,467.1 1054.5,473.1 1056.0,474.6 1057.5,475.8 1059.0,464.5 1060.5,459.7 1062.0,457.8 1063.5,458.6 1065.0,466.2 1066.5,468.4 1068.0,473.9 1069.5,476.6 1071.0,477.9 1072.5,475.8 1074.0,475.0 1075.5,470.3 1077.0,472.4 1078.5,476.9 1080.0,484.6 1081.5,480.0 1083.0,476.7 1084.5,471.7 1086.0,474.7 1087.5,472.2 1089.0,482.6 1090.5,482.3 1092.0,482.7 1093.5,478.3 1095.0,479.0 1096.5,479.3 1098.0,476.7 1099.5,477.9 1101.0,463.1 1102.5,457.7 1104.0,445.9 1105.5,440.2 1107.0,446.9 1108.5,456.2 1110.0,472.2 1111.5,480.2 1113.0,482.9 1114.5,476.5 1116.0,477.5 1117.5,474.4 1119.0,471.9 1120.5,474.8 1122.0,470.2 1123.5,473.1 1125.0,470.0 1126.5,476.8 1128.0,477.0 1129.5,473.0 1131.0,476.0 1132.5,475.5 1134.0,469.4 1135.5,467.4 1137.0,468.9 1138.5,475.4 1140.0,471.6 1141.5,473.8 1143.0,479.2 1144.5,474.2 1146.0,478.8 1147.5,478.1 1149.0,476.8 1150.5,477.2 1152.0,454.0 1153.5,471.1 1155.0,473.0 1156.5,465.2 1158.0,465.3 1159.5,447.5 1161.0,411.9 1161.7,404.0 1162.5,412.8 1164.0,423.8 1165.0,409.0 1167.0,446.0 1168.5,459.0 1170.0,459.9 1171.5,465.8 1173.0,471.1 1174.5,472.4 1176.0,469.3 1177.5,467.5 1179.0,471.9 1180.5,468.3 1182.0,471.1 1183.5,471.6 1185.0,466.8 1186.5,468.5 1188.0,468.2 1189.5,469.6 1191.0,470.5 1192.5,472.5 1194.0,470.6 1195.5,472.6 1197.0,477.3 1198.5,475.5 1200.0,472.6 1201.5,473.2 1203.0,472.5 1204.5,474.9 1206.0,472.7 1207.5,472.9 1209.0,475.5 1210.5,472.5 1212.0,466.1 1213.5,470.2 1215.0,471.4 1216.5,463.0 1218.0,465.3 1219.5,469.6 1221.0,470.8 1222.5,465.8 1224.0,472.4 1225.5,476.3 1227.0,473.4 1228.5,472.4 1230.0,474.6 1231.5,471.0 1233.0,475.9 1234.5,477.9 1236.0,480.2 1237.5,486.6 1239.0,477.6 1240.5,479.3 1242.0,475.6 1243.5,473.6 1245.0,473.8 1246.5,475.2 1248.0,475.0 1249.5,474.8 1251.0,473.5 1252.5,472.2 1254.0,474.2 1255.5,479.3 1257.0,475.2 1258.5,476.6 1260.0,480.1 1261.5,481.3 1263.0,478.4 1264.5,475.9 1266.0,473.5 1267.5,474.5 1269.0,476.7 1270.5,474.2 1272.0,465.9 1273.5,465.2 1275.0,472.3 1276.5,465.7 1278.0,463.7 1279.5,462.6 1281.0,457.4 1282.5,455.8 1284.0,454.3 1285.5,459.0 1287.0,463.7 1288.5,471.0 1290.0,470.8 1291.5,474.5 1293.0,474.3 1294.5,469.5 1296.0,475.6 1297.5,472.4 1299.0,478.7 1300.5,476.3 1302.0,472.1 1303.5,471.5 1305.0,471.5 1306.5,476.3 1308.0,475.7 1309.5,479.5 1311.0,475.5 1312.5,475.3 1314.0,479.6 1315.5,474.3 1317.0,475.9 1318.5,476.0 1320.0,476.7 1321.5,476.0 1323.0,482.4 1324.5,480.4 1326.0,480.0 1327.5,479.6 1329.0,472.4 1330.5,473.4 1332.0,469.2 1333.5,469.3 1335.0,469.9 1336.5,472.5 1338.0,473.8 1339.5,472.1 1341.0,475.1 1342.5,469.7 1344.0,474.6 1345.5,473.0 1347.0,468.2 1348.5,472.0 1350.0,466.0 1351.5,466.2 1353.0,467.5 1354.5,465.8 1356.0,460.6 1357.5,460.6 1359.0,454.8 1360.5,450.8 1362.0,449.3 1363.5,455.0 1365.0,462.6 1366.5,470.2 1368.0,477.1 1369.5,472.1 1371.0,474.9 1372.5,473.7 1374.0,476.5 1375.5,469.6 1377.0,466.0 1378.5,473.6 1380.0,473.5 1381.5,468.7 1383.0,469.8 1384.5,474.7 1386.0,477.8 1387.5,471.7 1389.0,478.5 1390.5,469.4 1392.0,474.2 1393.5,464.6 1395.0,469.8 1396.5,469.6 1398.0,469.9 1399.5,470.0 1401.0,474.2 1402.5,473.2 1404.0,479.2 1405.5,473.0 1407.0,474.8 1408.5,479.5 1410.0,483.2 1411.5,478.5 1413.0,474.7 1414.5,473.7 1416.0,476.2 1417.5,473.5 1419.0,477.3 1420.5,474.4 1422.0,472.4 1423.5,475.2 1425.0,471.8 1426.5,472.6 1428.0,473.3 1429.5,475.0 1431.0,467.7 1432.5,474.7 1434.0,472.2 1435.5,470.4 1437.0,471.0 1438.5,471.5 1440.0,471.0 1441.5,462.8 1443.0,472.1 1444.5,469.4 1446.0,473.1 1447.5,468.5 1449.0,467.6 1450.5,464.0 1452.0,468.3 1453.5,466.3 1455.0,471.3 1456.5,471.3 1458.0,470.9 1459.5,472.2 1461.0,470.7 1462.5,463.7 1464.0,464.9 1465.5,467.5 1467.0,472.3 1468.5,470.9 1470.0,469.5 1471.5,467.3 1473.0,472.1 1474.5,474.4 1476.0,474.3 1477.5,473.4 1479.0,474.5 1480.5,469.5 1482.0,470.2 1483.5,473.4 1485.0,469.8 1486.5,466.1 1488.0,476.1 1489.5,476.4 1491.0,476.1 1492.5,475.2 1494.0,475.3 1495.5,476.5 1497.0,477.0 1498.5,471.7 1500.0,473.1 1501.5,469.2 1503.0,476.3 1504.5,472.7 1506.0,474.1 1507.5,476.5 1509.0,475.4 1510.5,473.8 1512.0,474.8 1513.5,475.2 1515.0,471.0 1516.5,471.1 1518.0,474.0 1519.5,477.3 1521.0,474.1 1522.5,474.0 1524.0,474.2 1525.5,476.3 1527.0,474.4 1528.5,476.9 1530.0,485.7 1531.5,476.2 1533.0,472.9 1534.5,471.7 1536.0,469.4 1537.5,471.6 1539.0,472.8 1540.5,471.1 1542.0,475.1 1543.5,458.1 1545.0,448.9 1546.5,449.3 1548.0,455.6 1549.5,457.1 1551.0,470.1 1552.5,470.6 1554.0,474.5 1555.5,479.2 1557.0,480.7 1558.5,476.5 1560.0,479.0 1561.5,476.4 1563.0,478.1 1564.5,477.2 1566.0,472.8 1567.5,466.1 1569.0,452.5 1570.5,442.3 1572.0,444.9 1573.5,456.7 1575.0,468.8 1576.5,465.2 1578.0,472.8 1579.5,473.7 1581.0,473.6 1582.5,467.7 1584.0,470.0 1585.5,468.4 1587.0,472.8 1588.5,477.3 1590.0,473.6 1591.5,473.7 1593.0,474.3 1594.5,475.2 1596.0,482.1 1597.5,477.6 1599.0,472.2 1600.5,461.4 1602.0,468.9 1603.5,468.9 1605.0,471.0 1606.5,466.3 1608.0,466.4 1609.5,470.5 1611.0,467.7 1612.5,467.5 1614.0,471.0 1615.5,471.0 1617.0,472.6 1618.5,469.6 1620.0,464.9 1621.5,468.6 1623.0,462.4 1624.5,461.8 1626.0,459.2 1627.5,451.7 1629.0,411.8 1630.0,397.0 1632.0,431.2 1633.5,425.7 1635.0,420.9 1637.0,373.0 1638.0,387.9 1639.5,437.4 1641.0,459.0 1642.5,465.8 1644.0,469.5 1645.5,470.5 1647.0,469.4 1648.5,471.2 1650.0,473.5 1651.5,461.2 1653.0,448.5 1654.5,437.7 1656.0,433.8 1657.5,436.8 1659.0,447.7 1660.5,444.6 1662.0,440.3 1663.5,444.2 1665.0,452.9 1666.5,451.2 1668.0,445.0 1669.5,445.3 1671.0,455.7 1672.5,458.3 1674.0,454.6 1675.5,459.0 1677.0,466.8 1678.5,476.0 1680.0,477.9 1681.5,488.8 1683.0,489.3 1684.5,489.6 1686.0,494.8 1687.5,492.6 1689.0,505.7 1690.5,506.3 1692.0,511.8 1693.5,520.2 1695.0,522.4 1696.5,523.9 1698.0,528.9" fill="none" stroke="#dcdcdc" stroke-width="1.25" stroke-linejoin="round"/>
</svg>
<div class="abs gl" style="left:4.5px;top:39.0px">+25</div>
<div class="abs gl" style="left:1655px;width:40px;text-align:right;top:39.0px">+25</div>
<div class="abs gl" style="left:4.5px;top:69.0px">+20</div>
<div class="abs gl" style="left:1655px;width:40px;text-align:right;top:69.0px">+20</div>
<div class="abs gl" style="left:4.5px;top:99.5px">+15</div>
<div class="abs gl" style="left:1655px;width:40px;text-align:right;top:99.5px">+15</div>
<div class="abs gl" style="left:4.5px;top:130.5px">+10</div>
<div class="abs gl" style="left:1655px;width:40px;text-align:right;top:130.5px">+10</div>
<div class="abs gl" style="left:4.5px;top:160.5px">+5</div>
<div class="abs gl" style="left:1655px;width:40px;text-align:right;top:160.5px">+5</div>
<div class="abs gl" style="left:4.5px;top:191.0px">S9</div>
<div class="abs gl" style="left:1655px;width:40px;text-align:right;top:191.0px">S9</div>
<div class="abs gl" style="left:4.5px;top:227.5px">S8</div>
<div class="abs gl" style="left:1655px;width:40px;text-align:right;top:227.5px">S8</div>
<div class="abs gl" style="left:4.5px;top:264.0px">S7</div>
<div class="abs gl" style="left:1655px;width:40px;text-align:right;top:264.0px">S7</div>
<div class="abs gl" style="left:4.5px;top:300.5px">S6</div>
<div class="abs gl" style="left:1655px;width:40px;text-align:right;top:300.5px">S6</div>
<div class="abs gl" style="left:4.5px;top:337.0px">S5</div>
<div class="abs gl" style="left:1655px;width:40px;text-align:right;top:337.0px">S5</div>
<div class="abs gl" style="left:4.5px;top:373.5px">S4</div>
<div class="abs gl" style="left:1655px;width:40px;text-align:right;top:373.5px">S4</div>
<div class="abs gl" style="left:4.5px;top:410.0px">S3</div>
<div class="abs gl" style="left:1655px;width:40px;text-align:right;top:410.0px">S3</div>
<div class="abs gl" style="left:4.5px;top:446.5px">S2</div>
<div class="abs gl" style="left:1655px;width:40px;text-align:right;top:446.5px">S2</div>
<div class="abs gl" style="left:4.5px;top:483.0px">S1</div>
<div class="abs gl" style="left:1655px;width:40px;text-align:right;top:483.0px">S1</div>
</div>
<div id="ruler" class="abs" style="left:0;top:614px;width:1699px;height:21px;background:linear-gradient(#666 0,#5a5a5a 3px,#474747 7px,#343434 10.5px,#000 11.5px,#000 100%)">
<svg class="abs" style="left:0;top:0" width="1699" height="8" viewBox="0 0 1699 8">
<path d="M8.5 1V3M17.5 1V4M26.5 1V3M35.5 1V5.5M44.5 1V3M53.5 1V4M62.5 1V3M70.5 1V4M79.5 1V3M88.5 1V4M97.5 1V3M106.5 1V4M115.5 1V3M124.5 1V5.5M132.5 1V3M141.5 1V4M150.5 1V3M159.5 1V4M168.5 1V3M177.5 1V4M185.5 1V3M194.5 1V4M203.5 1V3M212.5 1V5.5M221.5 1V3M230.5 1V4M239.5 1V3M247.5 1V4M256.5 1V3M265.5 1V4M274.5 1V3M283.5 1V4M292.5 1V3M300.5 1V5.5M309.5 1V3M318.5 1V4M327.5 1V3M336.5 1V4M345.5 1V3M354.5 1V4M362.5 1V3M371.5 1V4M380.5 1V3M389.5 1V5.5M398.5 1V3M407.5 1V4M416.5 1V3M424.5 1V4M433.5 1V3M442.5 1V4M451.5 1V3M460.5 1V4M469.5 1V3M478.5 1V5.5M486.5 1V3M495.5 1V4M504.5 1V3M513.5 1V4M522.5 1V3M531.5 1V4M539.5 1V3M548.5 1V4M557.5 1V3M566.5 1V5.5M575.5 1V3M584.5 1V4M593.5 1V3M601.5 1V4M610.5 1V3M619.5 1V4M628.5 1V3M637.5 1V4M646.5 1V3M654.5 1V5.5M663.5 1V3M672.5 1V4M681.5 1V3M690.5 1V4M699.5 1V3M708.5 1V4M716.5 1V3M725.5 1V4M734.5 1V3M743.5 1V5.5M752.5 1V3M761.5 1V4M770.5 1V3M778.5 1V4M787.5 1V3M796.5 1V4M805.5 1V3M814.5 1V4M823.5 1V3M832.5 1V5.5M840.5 1V3M849.5 1V4M858.5 1V3M867.5 1V4M876.5 1V3M885.5 1V4M893.5 1V3M902.5 1V4M911.5 1V3M920.5 1V5.5M929.5 1V3M938.5 1V4M947.5 1V3M955.5 1V4M964.5 1V3M973.5 1V4M982.5 1V3M991.5 1V4M1000.5 1V3M1008.5 1V5.5M1017.5 1V3M1026.5 1V4M1035.5 1V3M1044.5 1V4M1053.5 1V3M1062.5 1V4M1070.5 1V3M1079.5 1V4M1088.5 1V3M1097.5 1V5.5M1106.5 1V3M1115.5 1V4M1124.5 1V3M1132.5 1V4M1141.5 1V3M1150.5 1V4M1159.5 1V3M1168.5 1V4M1177.5 1V3M1186.5 1V5.5M1194.5 1V3M1203.5 1V4M1212.5 1V3M1221.5 1V4M1230.5 1V3M1239.5 1V4M1247.5 1V3M1256.5 1V4M1265.5 1V3M1274.5 1V5.5M1283.5 1V3M1292.5 1V4M1301.5 1V3M1309.5 1V4M1318.5 1V3M1327.5 1V4M1336.5 1V3M1345.5 1V4M1354.5 1V3M1362.5 1V5.5M1371.5 1V3M1380.5 1V4M1389.5 1V3M1398.5 1V4M1407.5 1V3M1416.5 1V4M1424.5 1V3M1433.5 1V4M1442.5 1V3M1451.5 1V5.5M1460.5 1V3M1469.5 1V4M1478.5 1V3M1486.5 1V4M1495.5 1V3M1504.5 1V4M1513.5 1V3M1522.5 1V4M1531.5 1V3M1540.5 1V5.5M1548.5 1V3M1557.5 1V4M1566.5 1V3M1575.5 1V4M1584.5 1V3M1593.5 1V4M1601.5 1V3M1610.5 1V4M1619.5 1V3M1628.5 1V5.5M1637.5 1V3M1646.5 1V4M1655.5 1V3M1663.5 1V4M1672.5 1V3M1681.5 1V4M1690.5 1V3" stroke="#bdbdbd" stroke-width="1.2" fill="none"/>
</svg>
<div class="abs rl" style="left:5.0px;top:8px">14.210</div>
<div class="abs rl" style="left:93.5px;top:8px">14.215</div>
<div class="abs rl" style="left:182.0px;top:8px">14.220</div>
<div class="abs rl" style="left:270.5px;top:8px">14.225</div>
<div class="abs rl" style="left:359.0px;top:8px">14.230</div>
<div class="abs rl" style="left:447.5px;top:8px">14.235</div>
<div class="abs rl" style="left:536.0px;top:8px">14.240</div>
<div class="abs rl" style="left:624.5px;top:8px">14.245</div>
<div class="abs rl" style="left:713.0px;top:8px">14.250</div>
<div class="abs rl" style="left:801.5px;top:8px">14.255</div>
<div class="abs rl" style="left:890.0px;top:8px">14.260</div>
<div class="abs rl" style="left:978.5px;top:8px">14.265</div>
<div class="abs rl" style="left:1067.0px;top:8px">14.270</div>
<div class="abs rl" style="left:1155.5px;top:8px">14.275</div>
<div class="abs rl" style="left:1244.0px;top:8px">14.280</div>
<div class="abs rl" style="left:1332.5px;top:8px">14.285</div>
<div class="abs rl" style="left:1421.0px;top:8px">14.290</div>
<div class="abs rl" style="left:1509.5px;top:8px">14.295</div>
<div class="abs rl" style="left:1598.0px;top:8px">14.300</div>
</div>
<div class="abs" style="left:0;top:635px;width:1699px;height:6px;background:linear-gradient(#d0d0d0,#ececec 40%,#e4e4e4)"></div>
<div class="abs" style="left:818px;top:637px;width:62px;height:2px;background:repeating-linear-gradient(90deg,#8a8a8a 0,#8a8a8a 2px,transparent 2px,transparent 4px)"></div>
<div class="abs" style="left:62px;top:77px;width:375px;height:66px;background:#000"></div>
<div id="freq" class="abs mono" style="left:58.5px;top:82.6px;font-size:47px;letter-spacing:-1.7px;line-height:54px;color:#fff;white-space:nowrap;transform-origin:0 0;transform:scaleY(0.92)">14.245.000</div>
<div class="abs mono" style="left:341px;top:89px;font-size:12.4px;line-height:16px;color:#e6c619;white-space:pre">RX 1</div>
<div class="abs mono" style="left:388px;top:89px;font-size:12.4px;line-height:16px;color:#f2f2f2;white-space:pre">USB</div>
<div class="abs mono" style="left:341px;top:111px;font-size:10.9px;font-weight:bold;line-height:16px;color:#e6c619;white-space:pre">100 - 2900 Hz</div>
<div class="abs" style="left:61px;top:139px;width:218px;height:87px;background:#000;border:1px solid #2e2e2e;overflow:hidden">
<svg class="abs" style="left:-1px;top:-1px" width="218" height="87" viewBox="61 139 218 87">
<path d="M83.0 183.0 A252 252 0 0 1 170.5 167.5" fill="none" stroke="#d6d6d6" stroke-width="2.4"/>
<path d="M174.5 167.5 A252 252 0 0 1 257.5 183.2" fill="none" stroke="#d40000" stroke-width="2.6"/>
<path d="M90.0 180.5L88.4 175.8" stroke="#d6d6d6" stroke-width="1.4"/>
<path d="M98.5 177.9L96.2 170.2" stroke="#d6d6d6" stroke-width="1.4"/>
<path d="M107.0 175.5L105.8 170.7" stroke="#d6d6d6" stroke-width="1.4"/>
<path d="M115.5 173.5L113.8 165.7" stroke="#d6d6d6" stroke-width="1.4"/>
<path d="M124.5 171.6L123.6 166.7" stroke="#d6d6d6" stroke-width="1.4"/>
<path d="M134.0 170.1L132.9 162.2" stroke="#d6d6d6" stroke-width="1.4"/>
<path d="M143.0 169.0L142.5 164.0" stroke="#d6d6d6" stroke-width="1.4"/>
<path d="M152.0 168.1L151.4 160.2" stroke="#d6d6d6" stroke-width="1.4"/>
<path d="M161.0 167.7L160.8 162.7" stroke="#d6d6d6" stroke-width="1.4"/>
<path d="M170.0 167.5L170.0 157.5" stroke="#d6d6d6" stroke-width="1.4"/>
<path d="M183.0 167.8L183.2 163.3" stroke="#d40000" stroke-width="1.3"/>
<path d="M198.0 169.1L198.9 161.1" stroke="#d40000" stroke-width="1.3"/>
<path d="M213.5 171.3L214.3 166.9" stroke="#d40000" stroke-width="1.3"/>
<path d="M228.5 174.4L230.4 166.6" stroke="#d40000" stroke-width="1.3"/>
<path d="M243.0 178.3L244.3 174.0" stroke="#d40000" stroke-width="1.3"/>
<path d="M257.5 183.2L260.3 175.7" stroke="#d40000" stroke-width="1.3"/>
<text x="98.0" y="165.5" font-family="Liberation Sans, sans-serif" font-style="italic" font-size="10" fill="#9a9a9a" text-anchor="middle">1</text>
<text x="115.0" y="159.5" font-family="Liberation Sans, sans-serif" font-style="italic" font-size="10" fill="#9a9a9a" text-anchor="middle">3</text>
<text x="134.0" y="157.0" font-family="Liberation Sans, sans-serif" font-style="italic" font-size="10" fill="#9a9a9a" text-anchor="middle">5</text>
<text x="152.0" y="155.0" font-family="Liberation Sans, sans-serif" font-style="italic" font-size="10" fill="#9a9a9a" text-anchor="middle">7</text>
<text x="170.0" y="154.0" font-family="Liberation Sans, sans-serif" font-style="italic" font-size="10" fill="#9a9a9a" text-anchor="middle">9</text>
<text x="199.0" y="156.0" font-family="Liberation Sans, sans-serif" font-style="italic" font-size="10" fill="#9a9a9a" text-anchor="middle">+20</text>
<text x="230.0" y="161.0" font-family="Liberation Sans, sans-serif" font-style="italic" font-size="10" fill="#9a9a9a" text-anchor="middle">+40</text>
<text x="261.0" y="170.0" font-family="Liberation Sans, sans-serif" font-style="italic" font-size="10" fill="#9a9a9a" text-anchor="middle">+60</text>
<path d="M96.5 168 L115.8 227" stroke="#000" stroke-width="3.4"/><path d="M113 157 L128.3 227" stroke="#000" stroke-width="4.6"/>
<path d="M96.5 168 L115.8 227" stroke="#b8b8b8" stroke-width="1"/>
<path d="M113 157 L128.3 227" stroke="#e00000" stroke-width="1.8"/>
</svg>
<div class="abs" style="left:85px;top:59px;width:46px;height:16px;border-radius:3px;background:radial-gradient(ellipse at 50% 50%,#d6e85a 0%,#b4d030 70%,#a8c428 100%);color:#000;font-size:12px;line-height:16px;text-align:center">S3</div>
</div>
<div class="abs" style="left:656px;top:80px;width:51px;height:534px;background:linear-gradient(rgba(0,100,0,.96) 0%,rgba(2,100,2,.95) 35%,rgba(14,92,14,.88) 50%,rgba(40,84,40,.55) 63%,rgba(90,110,90,.30) 75%,rgba(130,135,130,.18) 100%)"></div>
<div class="abs" style="left:656px;top:80px;width:1px;height:534px;background:linear-gradient(#3fd83f,#36c036 50%,#5aa85a 100%)"></div>
<div class="abs" style="left:706px;top:80px;width:1px;height:534px;background:linear-gradient(#3fd83f,#36c036 50%,#5aa85a 100%)"></div>
<div class="abs" style="left:656px;top:80px;width:51px;height:6px;background:linear-gradient(90deg,#0cb00c 0%,#22c822 20%,#66ff66 50%,#22c822 80%,#0cb00c 100%)"></div>
<div class="abs" style="left:657px;top:115px;width:49px;height:2px;background:#1e9e1e"></div>
<div class="abs" style="left:673.5px;top:89px;width:15.5px;height:16px;border-radius:2.5px;background:#004400;color:#fff;font-size:10.5px;line-height:16px;text-align:center">1</div>
<div class="abs" style="left:656px;top:607px;width:51px;height:7px;background:linear-gradient(90deg,#1f8f1f 0%,#2c9a2c 25%,#82cc82 50%,#2c9a2c 75%,#1f8f1f 100%);opacity:.88"></div>
<div id="wf" class="abs" style="left:0;top:641px;width:1699px;height:365px;background:#000;overflow:hidden">
<svg class="abs" style="left:0;top:0" width="1699" height="365" viewBox="0 641 1699 365">
<defs>
<filter id="nz" x="0" y="0" width="100%" height="100%" color-interpolation-filters="sRGB"><feTurbulence type="fractalNoise" baseFrequency="0.62" numOctaves="2" seed="3" result="t"/><feColorMatrix in="t" type="matrix" values="0 0 0 0 0  0 0 0 0 0  1.5 0.5 0 0 -0.98  0 0 0 0 1"/></filter>
<filter id="b1" x="-20%" y="-5%" width="140%" height="110%"><feGaussianBlur stdDeviation="2.5 4"/></filter>
<filter id="b2" x="-50%" y="-2%" width="200%" height="104%"><feGaussianBlur stdDeviation="0.8 0"/></filter>
<filter id="b3"><feGaussianBlur stdDeviation="0.45"/></filter>
</defs>
<rect x="0" y="641" width="1683" height="365" fill="#000" filter="url(#nz)"/>
<rect x="66.0" y="641" width="2.0" height="365" fill="#0818b0" opacity="0.35" filter="url(#b2)"/>
<rect x="79.0" y="641" width="13.0" height="365" fill="#0a14a8" opacity="0.42" filter="url(#b2)"/>
<rect x="430.0" y="790" width="2.0" height="216" fill="#0c1cc0" opacity="0.45" filter="url(#b2)"/>
<rect x="603.0" y="790" width="5.0" height="216" fill="#0c20c8" opacity="0.60" filter="url(#b2)"/>
<rect x="682.0" y="641" width="2.0" height="365" fill="#0a18b8" opacity="0.50" filter="url(#b2)"/>
<rect x="770.0" y="641" width="2.0" height="365" fill="#0814a0" opacity="0.30" filter="url(#b2)"/>
<rect x="790.0" y="641" width="2.0" height="365" fill="#0814a0" opacity="0.25" filter="url(#b2)"/>
<rect x="978.0" y="641" width="2.0" height="365" fill="#0814a8" opacity="0.35" filter="url(#b2)"/>
<rect x="1030.0" y="641" width="2.0" height="365" fill="#0c20c8" opacity="0.50" filter="url(#b2)"/>
<rect x="1105.0" y="641" width="2.0" height="365" fill="#0814a0" opacity="0.25" filter="url(#b2)"/>
<rect x="1123.0" y="790" width="6.0" height="216" fill="#0a1cc0" opacity="0.42" filter="url(#b2)"/>
<rect x="1162.0" y="641" width="5.0" height="365" fill="#0a1cc0" opacity="0.42" filter="url(#b2)"/>
<rect x="1547.0" y="641" width="2.0" height="365" fill="#0814a8" opacity="0.35" filter="url(#b2)"/>
<rect x="1571.0" y="641" width="2.0" height="365" fill="#0814a8" opacity="0.40" filter="url(#b2)"/>
<rect x="1361.0" y="641" width="2.0" height="365" fill="#0814a0" opacity="0.25" filter="url(#b2)"/>
<rect x="493.0" y="641" width="2.0" height="365" fill="#0814a0" opacity="0.25" filter="url(#b2)"/>
<rect x="510.0" y="641" width="2.0" height="365" fill="#0814a0" opacity="0.25" filter="url(#b2)"/>
<path d="M318.5 973V1006" stroke="#3a7cff" stroke-width="1.2"/>
<path d="M1185.5 900V925" stroke="#2a60f0" stroke-width="1.2"/>
<rect x="0" y="857" width="1683" height="2" fill="#0a18b0" opacity=".24"/>
<rect x="0" y="930" width="1683" height="2" fill="#0a18b0" opacity=".24"/>
<rect x="3" y="675" width="47" height="31" fill="#0818d8" opacity="0.21" filter="url(#b1)"/>
<rect x="3" y="995" width="42" height="11" fill="#0818d8" opacity="0.18" filter="url(#b1)"/>
<rect x="110" y="641" width="36" height="75" fill="#0818d8" opacity="0.17" filter="url(#b1)"/>
<rect x="108" y="863" width="42" height="73" fill="#0818d8" opacity="0.21" filter="url(#b1)"/>
<rect x="112" y="936" width="34" height="70" fill="#0818d8" opacity="0.09" filter="url(#b1)"/>
<rect x="160" y="641" width="52" height="35" fill="#0818d8" opacity="0.24" filter="url(#b1)"/>
<rect x="160" y="690" width="52" height="31" fill="#0818d8" opacity="0.24" filter="url(#b1)"/>
<rect x="160" y="735" width="52" height="46" fill="#0818d8" opacity="0.25" filter="url(#b1)"/>
<rect x="142" y="790" width="70" height="56" fill="#0818d8" opacity="0.23" filter="url(#b1)"/>
<rect x="160" y="862" width="40" height="21" fill="#0818d8" opacity="0.25" filter="url(#b1)"/>
<rect x="160" y="895" width="52" height="36" fill="#0818d8" opacity="0.25" filter="url(#b1)"/>
<rect x="160" y="940" width="55" height="66" fill="#0818d8" opacity="0.15" filter="url(#b1)"/>
<rect x="368" y="641" width="45" height="60" fill="#0818d8" opacity="0.19" filter="url(#b1)"/>
<rect x="370" y="701" width="45" height="274" fill="#0818d8" opacity="0.05" filter="url(#b1)"/>
<rect x="533" y="715" width="50" height="231" fill="#0818d8" opacity="0.18" filter="url(#b1)"/>
<rect x="798" y="670" width="44" height="122" fill="#0818d8" opacity="0.06" filter="url(#b1)"/>
<rect x="798" y="792" width="44" height="153" fill="#0818d8" opacity="0.04" filter="url(#b1)"/>
<rect x="1030" y="690" width="16" height="32" fill="#0818d8" opacity="0.09" filter="url(#b1)"/>
<rect x="1030" y="795" width="16" height="41" fill="#0818d8" opacity="0.09" filter="url(#b1)"/>
<rect x="1276" y="785" width="49" height="221" fill="#0818d8" opacity="0.33" filter="url(#b1)"/>
<rect x="1246" y="800" width="30" height="200" fill="#0818d8" opacity="0.08" filter="url(#b1)"/>
<rect x="1325" y="800" width="27" height="200" fill="#0818d8" opacity="0.07" filter="url(#b1)"/>
<rect x="1478" y="771" width="148" height="150" fill="#0818d8" opacity="0.04" filter="url(#b1)"/>
<rect x="1630" y="641" width="53" height="284" fill="#0818d8" opacity="0.16" filter="url(#b1)"/>
<rect x="1630" y="950" width="45" height="20" fill="#0818d8" opacity="0.18" filter="url(#b1)"/>
<rect x="1630" y="980" width="40" height="26" fill="#0818d8" opacity="0.18" filter="url(#b1)"/>
<path d="M41 702.5h6M30 687.5h3M17 693.5h6M3 702.5h4M31 679.5h5M40 679.5h6M31 684.5h4M11 698.5h8M45 690.5h3M19 676.5h8M34 679.5h10M43 688.5h3M26 699.5h4M42 690.5h10M38 699.5h6M20 693.5h4M4 996.5h12M28 1003.5h8M21 1005.5h5M32 1005.5h3M142 872.5h4M131 922.5h5M133 899.5h12M142 899.5h6M119 876.5h3M123 906.5h6M143 907.5h12M122 874.5h12M140 916.5h3M118 883.5h4M129 898.5h6M139 885.5h4M125 924.5h12M142 933.5h12M142 924.5h12M110 880.5h6M144 893.5h12M120 896.5h12M141 882.5h12M135 873.5h6M115 887.5h12M112 864.5h8M137 889.5h12M120 911.5h4M116 905.5h6M147 929.5h4M118 909.5h5M119 935.5h4M118 922.5h12M120 902.5h8M123 893.5h10M144 910.5h10M124 878.5h10M126 920.5h3M114 923.5h6M137 903.5h5M182 652.5h6M173 658.5h10M168 664.5h2M176 674.5h6M168 649.5h3M181 675.5h6M188 663.5h4M200 656.5h12M164 668.5h3M171 646.5h10M199 671.5h6M200 660.5h10M176 664.5h5M200 652.5h5M204 645.5h10M170 674.5h4M160 672.5h6M205 661.5h3M172 661.5h10M165 660.5h3M195 649.5h12M191 649.5h6M209 671.5h4M193 654.5h6M187 658.5h8M205 660.5h3M169 671.5h2M203 669.5h5M199 657.5h3M161 650.5h3M177 658.5h10M171 652.5h4M176 675.5h3M185 714.5h4M201 692.5h4M204 693.5h8M195 703.5h10M182 698.5h8M204 694.5h3M162 700.5h3M188 715.5h3M200 694.5h3M164 710.5h4M176 700.5h12M193 696.5h5M198 695.5h4M162 698.5h3M195 713.5h3M174 704.5h5M187 707.5h12M204 692.5h6M179 713.5h3M176 718.5h10M161 710.5h2M192 715.5h6M193 715.5h10M187 692.5h8M183 696.5h6M185 703.5h8M172 715.5h3M205 707.5h5M171 707.5h3M204 696.5h5M182 757.5h12M196 766.5h8M201 753.5h4M193 770.5h5M165 748.5h3M167 742.5h3M194 766.5h4M198 767.5h10M188 745.5h3M179 768.5h5M195 749.5h3M170 774.5h2M177 745.5h10M177 745.5h8M167 759.5h4M187 777.5h4M206 758.5h6M171 763.5h8M196 775.5h5M193 774.5h8M164 768.5h2M178 756.5h8M169 744.5h3M171 756.5h4M189 773.5h10M194 750.5h4M188 739.5h8M202 738.5h12M166 755.5h2M164 749.5h3M203 778.5h12M208 775.5h4M197 760.5h6M173 774.5h5M182 774.5h10M178 772.5h4M187 753.5h8M175 770.5h10M176 775.5h3M202 767.5h5M162 805.5h2M185 820.5h8M155 834.5h5M208 829.5h5M193 840.5h6M181 821.5h3M203 821.5h3M158 829.5h4M189 791.5h5M183 819.5h8M146 796.5h6M145 838.5h8M169 811.5h3M178 844.5h5M156 805.5h6M193 825.5h6M202 806.5h8M194 793.5h4M179 807.5h4M207 793.5h4M160 834.5h3M190 815.5h12M162 830.5h3M157 845.5h3M144 795.5h5M171 803.5h6M200 829.5h6M193 824.5h8M145 803.5h8M146 835.5h6M209 798.5h4M177 818.5h6M166 838.5h2M179 800.5h5M169 815.5h3M144 795.5h4M190 791.5h3M200 803.5h5M189 811.5h5M203 840.5h6M204 833.5h4M190 839.5h10M145 799.5h5M175 809.5h10M198 841.5h12M177 840.5h8M172 813.5h10M148 822.5h6M207 845.5h8M191 818.5h10M182 824.5h6M146 792.5h4M151 802.5h10M153 820.5h10M196 842.5h5M184 814.5h12M160 802.5h8M205 832.5h5M186 830.5h10M163 790.5h3M167 823.5h2M152 827.5h6M192 826.5h10M166 794.5h2M164 841.5h2M201 827.5h6M200 811.5h6M180 797.5h3M186 827.5h12M180 798.5h6M146 830.5h10M155 822.5h5M174 822.5h5M172 804.5h3M182 840.5h10M171 844.5h4M179 844.5h5M178 870.5h6M166 870.5h2M177 874.5h10M172 865.5h3M160 867.5h10M162 866.5h3M174 882.5h12M194 875.5h10M190 871.5h6M189 906.5h12M175 915.5h4M207 924.5h5M188 912.5h4M163 924.5h2M172 929.5h3M199 927.5h5M166 903.5h4M177 923.5h3M169 900.5h3M183 900.5h5M169 916.5h2M178 923.5h3M185 904.5h5M207 928.5h6M202 929.5h12M168 912.5h3M195 898.5h6M177 901.5h4M179 927.5h5M198 909.5h12M183 925.5h4M205 911.5h3M198 927.5h5M189 915.5h8M167 908.5h4M206 919.5h10M193 930.5h6M204 896.5h8M189 914.5h10M191 898.5h12M204 920.5h6M167 1002.5h4M163 998.5h2M163 1004.5h4M164 988.5h3M163 955.5h3M161 990.5h3M164 962.5h4M388 693.5h5M388 696.5h4M378 641.5h8M407 687.5h6M387 681.5h3M403 645.5h10M402 652.5h8M397 643.5h5M380 698.5h5M374 677.5h8M399 670.5h4M540 763.5h12M548 821.5h3M537 858.5h4M565 745.5h10M546 760.5h6M556 725.5h12M563 900.5h6M556 918.5h12M549 772.5h12M567 861.5h10M544 782.5h8M562 736.5h5M539 772.5h3M537 858.5h5M548 722.5h12M557 880.5h4M538 873.5h12M578 893.5h6M545 790.5h6M574 833.5h10M562 884.5h8M557 852.5h12M563 914.5h4M555 925.5h5M573 943.5h6M539 835.5h8M550 866.5h10M555 816.5h8M572 934.5h3M556 786.5h12M569 757.5h10M570 744.5h5M540 868.5h10M577 849.5h10M548 847.5h8M575 935.5h6M569 939.5h3M561 816.5h10M569 889.5h10M555 851.5h5M553 756.5h5M571 836.5h8M1278 947.5h3M1306 840.5h12M1301 925.5h10M1311 913.5h3M1295 905.5h6M1313 948.5h10M1319 879.5h12M1317 950.5h6M1316 891.5h5M1283 934.5h4M1317 961.5h12M1318 991.5h6M1320 917.5h8M1294 994.5h3M1304 948.5h5M1306 988.5h3M1313 832.5h8M1298 933.5h3M1307 850.5h4M1295 977.5h4M1309 854.5h12M1315 969.5h10M1283 924.5h2M1298 977.5h10M1278 936.5h4M1280 978.5h4M1294 806.5h12M1309 911.5h5M1280 785.5h2M1280 994.5h3M1303 812.5h6M1303 909.5h5M1293 844.5h6M1297 870.5h4M1306 796.5h3M1308 998.5h12M1320 836.5h4M1315 879.5h5M1291 974.5h4M1315 825.5h3M1294 951.5h4M1320 831.5h6M1283 974.5h2M1300 982.5h3M1293 925.5h12M1312 857.5h4M1286 965.5h3M1293 878.5h4M1313 814.5h8M1281 802.5h3M1308 894.5h10M1306 847.5h6M1316 997.5h8M1321 965.5h6M1284 827.5h4M1310 1001.5h6M1286 896.5h3M1306 883.5h10M1310 881.5h8M1308 971.5h8M1281 800.5h4M1309 819.5h12M1276 933.5h10M1288 853.5h2M1310 945.5h10M1306 988.5h8M1317 807.5h8M1300 896.5h10M1303 877.5h4M1305 801.5h8M1308 986.5h8M1317 935.5h6M1297 949.5h8M1287 800.5h3M1285 880.5h3M1288 789.5h2M1307 952.5h5M1297 977.5h10M1318 786.5h6M1304 919.5h6M1320 812.5h5M1280 970.5h4M1314 872.5h4M1313 930.5h5M1316 822.5h3M1304 873.5h4M1276 898.5h12M1300 878.5h6M1287 884.5h4M1298 815.5h8M1293 873.5h8M1302 812.5h10M1286 930.5h4M1300 892.5h6M1315 798.5h5M1306 867.5h6M1283 797.5h3M1318 981.5h8M1299 845.5h4M1319 923.5h8M1303 948.5h12M1320 883.5h8M1293 834.5h3M1315 814.5h3M1283 926.5h4M1279 910.5h2M1323 958.5h4M1294 898.5h12M1293 992.5h8M1301 974.5h3M1297 861.5h4M1306 862.5h12M1279 897.5h4M1304 953.5h4M1310 862.5h6M1285 873.5h2M1292 809.5h3M1298 851.5h4M1293 894.5h10M1308 885.5h5M1309 893.5h12M1306 849.5h3M1318 867.5h12M1301 817.5h6M1314 883.5h6M1292 787.5h10M1317 869.5h5M1308 974.5h5M1312 950.5h10M1276 999.5h8M1312 798.5h3M1315 937.5h4M1299 785.5h4M1316 1005.5h6M1312 1004.5h10M1291 802.5h2M1320 828.5h6M1310 958.5h5M1308 870.5h3M1300 847.5h4M1316 846.5h12M1307 861.5h4M1277 945.5h10M1295 955.5h5M1292 870.5h10M1295 871.5h3M1317 805.5h6M1307 881.5h12M1277 983.5h12M1308 832.5h12M1307 989.5h8M1304 832.5h3M1299 920.5h12M1311 790.5h4M1280 902.5h2M1281 794.5h2M1301 952.5h8M1305 908.5h12M1295 931.5h12M1312 940.5h10M1317 881.5h10M1298 882.5h10M1319 838.5h3M1292 798.5h4M1320 896.5h3M1294 963.5h8M1290 905.5h2M1301 902.5h4M1314 819.5h6M1277 805.5h12M1284 960.5h2M1301 842.5h5M1298 803.5h12M1280 804.5h4M1318 877.5h5M1302 972.5h12M1307 800.5h5M1314 836.5h12M1291 865.5h4M1286 945.5h2M1285 846.5h3M1288 914.5h3M1294 986.5h6M1289 815.5h3M1308 981.5h5M1302 995.5h12M1292 809.5h6M1276 919.5h10M1289 880.5h3M1299 828.5h8M1290 947.5h3M1313 985.5h4M1314 887.5h12M1309 904.5h4M1287 951.5h3M1304 843.5h3M1303 810.5h10M1315 867.5h3M1286 918.5h4M1313 985.5h5M1292 914.5h4M1301 821.5h6M1302 849.5h5M1306 906.5h8M1290 865.5h3M1299 826.5h3M1314 813.5h12M1308 818.5h4M1296 830.5h6M1305 998.5h3M1638 842.5h5M1645 772.5h10M1653 820.5h6M1637 705.5h6M1677 905.5h3M1674 687.5h5M1671 644.5h4M1636 832.5h10M1654 658.5h5M1673 722.5h10M1644 658.5h8M1640 855.5h4M1666 753.5h10M1655 791.5h8M1657 688.5h8M1636 679.5h8M1633 776.5h4M1631 646.5h5M1666 799.5h5M1671 918.5h5M1672 851.5h3M1674 704.5h12M1674 837.5h12M1644 803.5h12M1650 843.5h8M1649 914.5h12M1643 839.5h6M1634 860.5h3M1665 887.5h12M1672 660.5h5M1634 915.5h6M1634 921.5h4M1671 711.5h10M1636 665.5h3M1660 808.5h10M1631 887.5h12M1670 824.5h3M1663 705.5h5M1632 690.5h4M1656 671.5h10M1640 889.5h3M1638 845.5h10M1658 673.5h4M1646 778.5h10M1649 698.5h10M1659 825.5h12M1660 753.5h8M1644 852.5h8M1670 739.5h12M1673 824.5h12M1638 798.5h4M1645 646.5h4M1655 712.5h10M1644 756.5h10M1666 899.5h10M1665 870.5h10M1678 695.5h4M1641 786.5h5M1666 692.5h3M1661 788.5h3M1671 714.5h6M1679 804.5h5M1659 663.5h4M1650 898.5h4M1662 755.5h3M1637 682.5h10M1649 786.5h6M1636 763.5h10M1653 804.5h5M1649 644.5h10M1677 663.5h4M1675 805.5h12M1670 680.5h5M1656 729.5h3M1644 747.5h10M1665 669.5h12M1637 708.5h10M1666 907.5h6M1631 874.5h4M1644 663.5h8M1646 686.5h6M1631 843.5h6M1656 885.5h4M1661 745.5h5M1673 766.5h4M1673 698.5h10M1636 917.5h5M1667 714.5h4M1672 828.5h5M1660 679.5h5M1663 806.5h6M1649 901.5h6M1648 869.5h4M1676 851.5h4M1638 824.5h3M1652 858.5h3M1669 818.5h5M1644 686.5h5M1664 666.5h12M1637 896.5h10M1636 685.5h5M1639 792.5h4M1631 716.5h10M1660 724.5h5M1670 951.5h6M1652 965.5h8M1663 967.5h12M1664 961.5h12M1648 952.5h4M1647 950.5h12M1641 952.5h8M1666 965.5h5M1658 998.5h4M1636 984.5h3M1630 992.5h8M1633 986.5h12M1644 983.5h3M1657 1004.5h10M1632 999.5h10M1656 989.5h6M1643 1005.5h6M1652 988.5h3M1640 992.5h5" stroke="rgb(20,70,255)" stroke-width="1.2" opacity="0.85" fill="none" filter="url(#b3)"/>
<path d="M23 702.5h6M39 690.5h4M28 703.5h3M13 684.5h8M17 682.5h5M24 697.5h3M29 681.5h3M7 676.5h10M11 698.5h8M31 678.5h6M21 702.5h4M30 675.5h8M8 676.5h3M14 697.5h5M39 694.5h6M13 692.5h4M43 685.5h4M6 677.5h10M19 696.5h5M32 689.5h10M25 691.5h12M17 677.5h3M46 678.5h4M20 679.5h3M35 996.5h5M40 1001.5h5M22 1000.5h8M29 1005.5h3M20 997.5h12M34 1003.5h5M22 997.5h8M17 1002.5h10M117 690.5h3M139 707.5h8M114 652.5h8M114 696.5h6M116 708.5h10M123 693.5h3M115 667.5h8M129 685.5h10M140 658.5h4M116 661.5h4M122 646.5h8M124 687.5h4M110 651.5h12M127 684.5h4M119 655.5h5M139 688.5h5M115 667.5h12M119 668.5h10M131 656.5h6M111 654.5h8M123 662.5h4M129 677.5h5M119 642.5h10M122 681.5h10M125 667.5h6M126 658.5h10M132 713.5h8M127 666.5h4M119 652.5h8M116 906.5h5M140 890.5h6M135 886.5h12M130 918.5h3M130 901.5h10M121 919.5h3M142 919.5h10M126 891.5h5M121 909.5h12M123 887.5h8M131 894.5h12M135 926.5h5M134 868.5h12M132 923.5h4M126 898.5h4M126 896.5h8M144 906.5h6M146 929.5h6M125 910.5h12M137 883.5h4M127 897.5h12M131 922.5h3M134 878.5h6M119 906.5h10M130 905.5h5M112 881.5h6M109 922.5h6M139 912.5h4M132 914.5h6M147 894.5h5M127 881.5h8M139 888.5h10M133 888.5h3M118 916.5h4M115 905.5h5M132 872.5h4M139 911.5h10M126 881.5h6M134 867.5h3M113 926.5h12M121 935.5h6M120 918.5h3M122 869.5h12M129 893.5h3M117 869.5h10M115 972.5h8M118 955.5h3M180 656.5h5M194 657.5h8M173 669.5h12M185 663.5h6M185 662.5h3M184 651.5h4M206 648.5h3M201 660.5h6M202 669.5h3M190 658.5h4M185 662.5h12M186 664.5h12M197 675.5h5M180 666.5h5M190 659.5h6M205 649.5h12M181 666.5h5M204 653.5h3M185 648.5h10M176 659.5h3M176 646.5h5M179 643.5h12M186 644.5h12M192 657.5h8M194 658.5h3M186 645.5h12M203 672.5h12M180 667.5h6M191 669.5h5M189 700.5h3M204 714.5h5M193 703.5h12M201 706.5h6M186 691.5h8M187 704.5h3M174 710.5h6M192 703.5h8M174 703.5h12M192 703.5h3M208 701.5h3M194 704.5h3M179 713.5h6M182 692.5h4M172 703.5h8M203 698.5h8M178 716.5h12M186 708.5h4M201 706.5h5M193 713.5h5M199 693.5h3M193 706.5h4M177 697.5h5M193 693.5h12M196 702.5h12M180 699.5h3M182 738.5h5M177 750.5h8M193 754.5h8M187 755.5h12M193 740.5h8M160 765.5h8M189 739.5h10M182 743.5h3M193 742.5h6M188 764.5h6M201 751.5h3M205 764.5h6M197 751.5h8M204 741.5h4M189 774.5h8M161 750.5h6M188 736.5h5M195 767.5h3M175 737.5h10M202 777.5h10M197 768.5h6M184 773.5h5M208 766.5h8M181 772.5h6M207 766.5h5M201 777.5h8M195 756.5h4M192 735.5h3M193 760.5h3M201 771.5h8M185 765.5h3M172 780.5h10M208 845.5h5M189 793.5h10M157 835.5h6M152 817.5h10M192 796.5h10M204 808.5h3M149 803.5h5M150 817.5h3M190 810.5h8M150 817.5h12M188 829.5h4M191 798.5h3M173 791.5h8M156 832.5h6M193 808.5h3M171 831.5h6M157 815.5h6M192 827.5h5M190 825.5h5M193 811.5h5M156 835.5h12M199 829.5h10M200 834.5h4M175 812.5h8M197 820.5h12M146 839.5h5M143 805.5h8M205 809.5h4M189 805.5h10M156 791.5h12M201 841.5h3M189 794.5h8M182 790.5h10M197 836.5h4M145 826.5h10M159 834.5h3M173 844.5h6M192 838.5h6M144 791.5h8M198 840.5h4M204 792.5h3M209 843.5h5M207 799.5h5M179 806.5h4M189 830.5h3M191 844.5h4M191 840.5h5M181 833.5h4M173 842.5h4M179 872.5h10M185 864.5h12M175 870.5h8M183 863.5h4M181 882.5h3M189 864.5h4M196 881.5h4M175 869.5h10M180 869.5h3M174 867.5h4M181 875.5h12M185 873.5h3M185 863.5h6M181 877.5h3M177 877.5h6M186 923.5h3M185 906.5h3M196 906.5h8M191 922.5h8M207 896.5h6M201 904.5h10M176 900.5h12M188 916.5h12M180 916.5h4M174 929.5h8M183 897.5h3M199 900.5h6M160 914.5h3M183 917.5h10M190 903.5h3M185 897.5h10M192 913.5h5M193 922.5h4M198 924.5h12M191 990.5h3M178 965.5h3M186 974.5h12M190 953.5h12M184 989.5h8M209 947.5h8M169 998.5h4M204 966.5h5M205 1003.5h3M161 974.5h4M197 982.5h4M174 976.5h12M209 952.5h4M208 982.5h4M196 940.5h5M196 996.5h12M179 970.5h8M197 968.5h4M188 946.5h3M183 989.5h12M169 997.5h4M173 957.5h8M174 977.5h5M200 1001.5h3M204 949.5h3M195 975.5h8M183 957.5h5M168 967.5h5M170 975.5h8M200 967.5h12M206 940.5h5M196 962.5h12M189 971.5h8M205 968.5h6M187 944.5h12M182 953.5h8M169 950.5h6M171 952.5h8M200 1003.5h5M187 985.5h10M185 983.5h8M198 969.5h8M212 1002.5h6M194 986.5h10M182 965.5h12M183 954.5h5M203 940.5h6M182 964.5h8M172 984.5h6M184 1000.5h5M385 668.5h6M405 668.5h8M369 644.5h3M397 656.5h10M397 656.5h3M378 686.5h8M398 668.5h10M379 641.5h6M379 666.5h6M374 687.5h12M369 661.5h6M408 664.5h8M402 690.5h3M389 692.5h6M375 674.5h12M387 681.5h6M394 667.5h8M404 690.5h3M380 681.5h10M375 698.5h4M382 661.5h4M401 692.5h3M408 669.5h8M386 676.5h5M383 641.5h6M402 658.5h3M408 684.5h5M401 655.5h3M397 683.5h12M393 683.5h8M388 665.5h6M391 652.5h8M390 679.5h10M388 654.5h5M394 695.5h8M389 688.5h10M406 686.5h4M398 644.5h6M395 690.5h5M397 689.5h3M397 700.5h4M391 684.5h3M387 673.5h5M369 653.5h12M396 674.5h3M537 890.5h3M550 851.5h5M534 938.5h3M536 736.5h8M567 738.5h5M579 877.5h3M566 933.5h12M567 806.5h3M539 850.5h6M547 830.5h3M557 776.5h5M543 770.5h12M572 829.5h5M565 909.5h5M533 860.5h4M541 941.5h12M533 804.5h5M554 771.5h5M549 863.5h12M558 818.5h4M563 791.5h12M566 842.5h12M575 896.5h8M553 863.5h3M579 806.5h8M539 940.5h4M557 829.5h5M581 750.5h3M540 737.5h4M553 812.5h10M563 941.5h5M553 789.5h4M575 797.5h12M549 734.5h4M548 919.5h10M567 831.5h3M535 802.5h8M550 874.5h4M565 834.5h8M561 902.5h8M562 876.5h8M575 807.5h10M533 767.5h10M551 914.5h4M550 786.5h8M546 773.5h12M537 744.5h5M580 915.5h6M569 767.5h4M534 848.5h3M554 770.5h10M578 848.5h6M580 910.5h3M565 823.5h10M577 908.5h6M564 937.5h12M534 796.5h3M574 855.5h5M552 734.5h10M555 919.5h8M565 732.5h8M566 757.5h12M550 755.5h10M554 851.5h3M555 820.5h3M554 922.5h12M538 873.5h6M543 894.5h12M552 825.5h5M545 833.5h6M579 836.5h6M569 843.5h4M556 877.5h8M561 760.5h12M554 889.5h4M543 757.5h12M534 912.5h6M564 847.5h10M555 819.5h12M567 879.5h10M533 715.5h8M556 855.5h6M534 856.5h6M549 822.5h4M574 795.5h12M549 911.5h6M570 935.5h4M577 851.5h10M541 791.5h3M546 859.5h4M563 880.5h5M552 824.5h4M543 907.5h3M576 731.5h3M543 748.5h8M566 926.5h6M563 743.5h5M575 789.5h12M538 893.5h5M552 929.5h12M555 769.5h3M541 884.5h6M579 730.5h5M560 838.5h8M551 830.5h5M542 723.5h10M546 765.5h10M558 836.5h10M547 945.5h10M565 862.5h6M573 867.5h12M575 854.5h6M554 727.5h5M569 839.5h8M574 879.5h5M535 729.5h8M566 782.5h4M575 837.5h4M552 818.5h8M560 850.5h8M560 847.5h12M546 811.5h3M541 903.5h10M566 742.5h12M543 921.5h8M538 748.5h10M568 889.5h3M575 865.5h6M550 871.5h3M578 917.5h5M548 757.5h4M572 812.5h12M567 856.5h10M575 845.5h4M556 821.5h8M580 871.5h3M547 819.5h10M571 748.5h3M566 844.5h6M534 797.5h8M534 819.5h3M577 741.5h4M560 863.5h5M573 720.5h4M576 878.5h6M557 745.5h4M565 777.5h8M534 829.5h3M574 818.5h6M549 940.5h12M574 757.5h12M549 724.5h12M568 720.5h5M550 755.5h5M545 845.5h12M567 921.5h10M558 930.5h8M569 763.5h4M551 808.5h3M566 777.5h12M563 809.5h12M535 926.5h4M553 780.5h12M540 873.5h12M551 845.5h8M568 938.5h8M554 720.5h3M539 784.5h5M542 926.5h10M565 898.5h5M568 754.5h10M535 791.5h4M551 869.5h5M576 906.5h4M545 759.5h5M574 742.5h8M572 784.5h8M543 889.5h3M551 875.5h4M580 833.5h4M576 922.5h4M573 907.5h12M548 931.5h3M562 783.5h10M541 884.5h12M580 931.5h3M571 784.5h3M554 721.5h6M545 726.5h6M535 916.5h12M558 732.5h10M580 769.5h4M566 830.5h6M835 712.5h3M808 672.5h6M828 778.5h6M818 744.5h10M827 678.5h5M825 724.5h3M1041 695.5h8M1037 832.5h4M1033 828.5h6M1032 816.5h3M1312 815.5h8M1309 999.5h3M1304 878.5h12M1307 802.5h12M1321 919.5h8M1318 808.5h8M1322 929.5h4M1317 967.5h6M1302 1002.5h6M1308 975.5h3M1307 908.5h5M1304 837.5h6M1307 838.5h12M1315 847.5h3M1315 978.5h12M1316 956.5h10M1317 965.5h4M1308 871.5h6M1313 791.5h10M1300 856.5h8M1300 886.5h4M1317 985.5h6M1309 843.5h10M1319 1004.5h8M1318 852.5h3M1317 864.5h12M1304 917.5h3M1301 922.5h4M1310 854.5h5M1301 944.5h12M1296 935.5h4M1318 954.5h5M1304 852.5h6M1302 827.5h5M1296 905.5h12M1309 823.5h3M1295 895.5h12M1311 1000.5h8M1301 785.5h12M1295 817.5h8M1312 866.5h5M1301 979.5h8M1298 823.5h6M1306 822.5h5M1316 828.5h12M1301 965.5h10M1300 823.5h6M1294 871.5h12M1301 811.5h6M1319 939.5h3M1300 807.5h8M1293 790.5h3M1320 821.5h6M1312 991.5h6M1311 925.5h10M1293 806.5h10M1311 917.5h12M1307 889.5h5M1297 838.5h10M1299 947.5h6M1302 892.5h4M1311 811.5h10M1304 982.5h10M1292 876.5h8M1311 804.5h6M1297 829.5h12M1294 979.5h5M1317 847.5h6M1318 930.5h6M1304 970.5h5M1313 892.5h4M1318 993.5h3M1277 959.5h12M1295 887.5h10M1298 848.5h3M1320 881.5h3M1278 798.5h4M1317 979.5h10M1303 940.5h5M1315 788.5h8M1317 813.5h12M1319 960.5h4M1308 846.5h10M1277 886.5h5M1306 998.5h12M1317 942.5h4M1292 888.5h10M1310 946.5h12M1305 824.5h3M1317 854.5h5M1316 875.5h8M1313 976.5h10M1293 858.5h3M1320 810.5h4M1322 813.5h3M1302 871.5h12M1278 812.5h10M1295 877.5h4M1306 797.5h12M1309 989.5h12M1295 902.5h3M1298 866.5h12M1277 902.5h5M1306 980.5h5M1298 791.5h6M1297 815.5h3M1292 879.5h5M1305 908.5h8M1306 988.5h12M1304 855.5h8M1303 820.5h12M1296 893.5h3M1300 892.5h5M1305 859.5h3M1297 899.5h12M1277 860.5h4M1305 799.5h4M1313 786.5h6M1297 873.5h8M1295 920.5h10M1296 812.5h3M1318 992.5h12M1298 890.5h10M1310 857.5h8M1297 789.5h4M1312 878.5h12M1308 940.5h6M1296 1003.5h4M1303 877.5h3M1316 909.5h5M1298 1002.5h3M1308 804.5h4M1318 811.5h5M1310 835.5h3M1299 814.5h3M1317 967.5h6M1293 870.5h6M1301 912.5h8M1303 986.5h6M1307 807.5h5M1316 976.5h4M1295 925.5h8M1296 870.5h8M1301 798.5h3M1303 787.5h5M1316 875.5h12M1300 821.5h12M1311 949.5h6M1278 913.5h4M1303 925.5h6M1295 849.5h8M1314 818.5h6M1318 897.5h4M1311 882.5h6M1297 831.5h6M1319 922.5h4M1301 933.5h3M1293 938.5h12M1261 864.5h5M1259 887.5h10M1274 879.5h3M1256 889.5h6M1271 821.5h4M1266 869.5h12M1261 982.5h5M1249 868.5h3M1261 920.5h10M1258 919.5h3M1267 815.5h6M1250 837.5h10M1261 853.5h4M1258 854.5h3M1248 819.5h6M1266 887.5h12M1255 855.5h10M1266 856.5h10M1259 955.5h3M1262 806.5h8M1254 917.5h8M1266 916.5h8M1269 901.5h3M1246 862.5h6M1249 833.5h12M1270 952.5h6M1269 829.5h10M1271 817.5h4M1265 804.5h8M1260 906.5h4M1249 858.5h6M1248 918.5h6M1261 934.5h12M1263 856.5h3M1252 974.5h5M1248 815.5h10M1247 827.5h6M1347 919.5h8M1325 836.5h12M1336 832.5h8M1328 844.5h5M1345 911.5h3M1338 812.5h12M1332 997.5h10M1328 822.5h12M1344 965.5h4M1331 910.5h6M1327 881.5h10M1332 972.5h6M1336 928.5h6M1329 974.5h10M1344 904.5h8M1337 932.5h12M1340 908.5h3M1339 891.5h8M1325 865.5h4M1338 841.5h10M1653 652.5h4M1633 790.5h10M1631 734.5h8M1642 700.5h4M1647 861.5h12M1649 684.5h10M1662 654.5h12M1666 729.5h5M1672 703.5h3M1630 851.5h10M1653 801.5h5M1631 906.5h8M1631 750.5h5M1650 739.5h3M1656 895.5h4M1663 678.5h3M1638 729.5h12M1674 908.5h3M1665 670.5h4M1677 811.5h12M1644 845.5h4M1662 713.5h12M1673 766.5h4M1636 721.5h8M1647 924.5h10M1648 807.5h10M1641 724.5h4M1656 811.5h5M1664 890.5h4M1652 782.5h6M1663 766.5h3M1632 688.5h12M1638 919.5h5M1669 914.5h8M1632 851.5h5M1677 913.5h6M1636 911.5h4M1639 726.5h4M1633 657.5h10M1674 726.5h4M1665 919.5h12M1642 831.5h8M1657 849.5h4M1647 783.5h10M1646 817.5h6M1667 782.5h3M1650 908.5h6M1669 874.5h12M1664 758.5h10M1673 741.5h8M1639 877.5h12M1679 873.5h4M1658 830.5h5M1671 742.5h8M1632 885.5h5M1658 641.5h12M1634 916.5h8M1637 898.5h4M1670 775.5h6M1663 671.5h10M1631 773.5h4M1640 865.5h12M1662 714.5h3M1632 705.5h8M1678 825.5h5M1655 849.5h3M1681 771.5h3M1665 750.5h4M1672 869.5h3M1641 742.5h10M1673 754.5h5M1678 788.5h8M1664 751.5h8M1664 895.5h8M1643 752.5h4M1662 669.5h6M1663 733.5h8M1651 793.5h12M1664 836.5h4M1662 916.5h12M1642 841.5h6M1643 800.5h8M1631 792.5h6M1635 663.5h12M1651 916.5h10M1634 873.5h4M1674 812.5h8M1659 759.5h4M1662 756.5h12M1645 731.5h5M1657 733.5h6M1635 721.5h12M1636 685.5h4M1635 719.5h10M1669 839.5h6M1680 687.5h5M1637 682.5h8M1638 744.5h8M1648 690.5h10M1658 820.5h3M1656 917.5h5M1645 686.5h4M1678 849.5h3M1645 678.5h10M1637 717.5h6M1671 825.5h6M1674 804.5h10M1648 916.5h12M1649 744.5h5M1634 787.5h4M1655 649.5h6M1673 695.5h4M1657 669.5h8M1671 867.5h6M1666 756.5h5M1646 689.5h12M1667 748.5h8M1663 808.5h6M1674 903.5h10M1662 891.5h8M1645 659.5h6M1644 663.5h8M1635 906.5h5M1656 793.5h6M1668 886.5h3M1669 815.5h5M1672 855.5h10M1644 838.5h3M1670 840.5h10M1635 719.5h8M1650 833.5h8M1649 651.5h12M1644 912.5h6M1630 835.5h12M1648 807.5h3M1672 815.5h5M1673 722.5h4M1658 805.5h3M1662 808.5h10M1666 922.5h8M1655 728.5h4M1639 841.5h6M1668 641.5h4M1660 695.5h4M1675 651.5h3M1674 779.5h5M1664 897.5h4M1638 849.5h4M1668 889.5h10M1656 673.5h12M1649 712.5h10M1651 649.5h6M1644 791.5h12M1680 713.5h3M1632 763.5h10M1680 866.5h3M1635 709.5h12M1648 779.5h6M1658 785.5h4M1638 718.5h5M1664 845.5h5M1647 684.5h8M1662 748.5h12M1663 660.5h6M1676 805.5h6M1643 902.5h10M1633 655.5h6M1652 801.5h5M1649 847.5h3M1680 666.5h6M1634 823.5h12M1643 800.5h3M1639 860.5h12M1670 690.5h3M1676 693.5h10M1646 843.5h6M1647 786.5h12M1650 783.5h10M1660 666.5h5M1643 695.5h12M1661 857.5h4M1665 843.5h5M1637 850.5h5M1679 878.5h5M1646 901.5h12M1666 679.5h8M1652 859.5h12M1638 788.5h12M1653 666.5h12M1634 868.5h4M1640 668.5h3M1630 670.5h12M1644 885.5h10M1639 871.5h8M1659 817.5h10M1679 661.5h6M1640 814.5h5M1672 911.5h12M1641 692.5h10M1661 863.5h6M1641 865.5h4M1643 881.5h8M1648 837.5h5M1667 764.5h5M1674 864.5h5M1656 867.5h12M1677 919.5h10M1671 921.5h6M1642 737.5h5M1648 762.5h8M1676 709.5h12M1654 894.5h10M1659 871.5h4M1677 833.5h6M1648 845.5h8M1665 686.5h8M1669 805.5h10M1654 730.5h12M1663 911.5h10M1662 958.5h8M1631 969.5h3M1646 954.5h12M1649 954.5h6M1645 963.5h4M1657 951.5h4M1638 961.5h3M1638 964.5h6M1660 956.5h6M1633 968.5h10M1651 953.5h12M1648 960.5h4M1643 961.5h5M1642 967.5h4M1644 991.5h8M1647 989.5h8M1640 997.5h12M1645 992.5h3M1638 1002.5h3M1667 995.5h4M1641 993.5h5M1635 1000.5h4M1659 986.5h6M1644 997.5h4M1656 988.5h4M1664 980.5h10M1664 993.5h3M1630 985.5h5M1647 1000.5h10M1661 986.5h8M1652 987.5h5M1659 1005.5h4M1659 1000.5h3" stroke="rgb(12,36,241)" stroke-width="1.2" opacity="0.85" fill="none" filter="url(#b3)"/>
<path d="M11 689.5h12M34 695.5h10M41 677.5h3M43 694.5h4M7 695.5h10M46 701.5h8M6 699.5h3M42 687.5h3M42 675.5h3M18 684.5h5M36 678.5h6M11 692.5h6M27 703.5h12M7 679.5h8M3 694.5h5M20 677.5h5M28 698.5h12M29 692.5h10M42 694.5h6M29 683.5h8M37 677.5h4M14 676.5h6M27 679.5h5M25 705.5h10M16 676.5h10M9 677.5h5M42 693.5h3M19 693.5h10M7 695.5h3M42 698.5h5M31 690.5h8M21 683.5h5M8 1002.5h4M38 1002.5h12M4 1004.5h12M13 1000.5h10M23 1005.5h12M10 999.5h6M35 1005.5h4M41 1005.5h5M20 995.5h12M28 998.5h12M36 995.5h10M128 682.5h5M137 685.5h10M125 711.5h3M126 644.5h5M112 645.5h12M133 658.5h5M124 704.5h10M113 669.5h10M119 712.5h8M126 712.5h8M122 667.5h10M143 708.5h4M131 644.5h3M128 692.5h3M142 699.5h3M138 675.5h12M127 654.5h6M139 645.5h12M110 677.5h4M128 706.5h10M130 708.5h8M130 658.5h8M130 665.5h5M135 674.5h4M137 694.5h6M114 692.5h10M111 666.5h12M130 684.5h8M136 650.5h10M111 711.5h3M125 665.5h8M124 653.5h10M124 686.5h6M137 692.5h10M138 679.5h3M141 647.5h3M116 650.5h8M119 684.5h5M123 707.5h8M132 650.5h3M134 646.5h10M130 648.5h8M124 708.5h6M122 677.5h5M111 661.5h8M125 702.5h4M132 700.5h12M128 656.5h5M133 699.5h4M128 694.5h10M136 686.5h5M132 671.5h4M132 642.5h3M129 688.5h4M118 882.5h10M139 904.5h10M140 922.5h6M108 902.5h12M122 904.5h4M141 894.5h10M139 932.5h5M129 885.5h8M129 932.5h4M146 917.5h5M120 932.5h8M109 881.5h3M138 929.5h6M132 930.5h8M135 904.5h6M127 877.5h3M121 888.5h3M114 885.5h3M122 930.5h3M129 927.5h8M140 919.5h3M124 926.5h8M143 903.5h12M123 880.5h3M143 923.5h3M133 895.5h8M137 905.5h6M135 885.5h4M112 867.5h3M126 872.5h3M123 928.5h12M128 896.5h8M120 919.5h5M112 883.5h12M142 933.5h8M112 909.5h5M126 880.5h3M129 934.5h8M146 863.5h3M115 880.5h6M138 865.5h10M131 885.5h3M133 918.5h12M145 930.5h3M124 866.5h8M118 920.5h3M130 884.5h6M129 879.5h3M130 921.5h8M137 866.5h4M114 892.5h6M126 903.5h3M120 870.5h4M139 923.5h12M141 934.5h10M142 880.5h5M119 973.5h10M137 1003.5h5M127 974.5h8M115 945.5h10M121 968.5h8M120 971.5h4M114 944.5h6M138 977.5h10M113 973.5h12M130 1002.5h12M119 992.5h6M131 942.5h4M132 991.5h3M130 1005.5h4M113 976.5h6M127 969.5h10M120 999.5h5M126 963.5h6M121 990.5h8M130 966.5h3M119 956.5h8M141 979.5h10M137 958.5h12M141 963.5h6M113 989.5h12M137 956.5h4M119 995.5h6M187 667.5h4M194 658.5h10M199 648.5h10M202 669.5h5M178 654.5h5M206 658.5h3M204 645.5h5M190 664.5h6M186 667.5h8M197 671.5h8M202 671.5h8M172 661.5h10M172 651.5h12M206 644.5h10M202 671.5h3M200 669.5h12M187 644.5h5M187 654.5h4M160 673.5h3M203 716.5h12M186 698.5h3M173 703.5h12M190 699.5h8M180 704.5h8M172 708.5h6M175 712.5h5M194 691.5h8M197 690.5h10M182 694.5h3M188 704.5h4M201 706.5h3M195 702.5h10M190 702.5h8M172 701.5h8M200 778.5h6M180 741.5h5M186 757.5h3M200 760.5h10M202 756.5h4M210 766.5h3M196 771.5h5M172 774.5h3M185 744.5h5M176 754.5h12M201 751.5h8M174 770.5h5M195 749.5h8M175 744.5h5M191 744.5h10M177 743.5h5M196 752.5h5M191 764.5h8M182 770.5h3M196 801.5h5M198 832.5h10M209 823.5h6M183 835.5h12M194 806.5h5M193 817.5h4M151 828.5h10M181 822.5h5M193 806.5h3M183 810.5h4M195 817.5h5M176 832.5h4M204 791.5h8M177 814.5h8M150 844.5h4M144 840.5h6M202 828.5h10M149 830.5h8M185 829.5h5M154 822.5h8M155 836.5h6M199 792.5h8M147 823.5h4M179 832.5h5M190 831.5h10M182 836.5h8M151 828.5h4M146 831.5h3M149 827.5h4M153 812.5h3M182 866.5h8M182 882.5h5M185 879.5h12M178 902.5h4M194 923.5h10M174 923.5h12M185 919.5h3M183 923.5h3M193 908.5h8M202 927.5h6M206 921.5h6M174 927.5h4M171 910.5h10M207 925.5h6M194 898.5h12M186 926.5h3M179 908.5h12M178 898.5h8M192 994.5h3M172 941.5h5M207 977.5h6M203 942.5h6M173 985.5h10M201 1001.5h8M210 954.5h3M188 992.5h12M178 990.5h5M174 950.5h5M205 960.5h4M182 980.5h6M188 953.5h4M173 959.5h4M208 967.5h6M172 968.5h6M175 956.5h8M186 976.5h3M187 984.5h3M213 971.5h4M179 1000.5h3M161 976.5h10M184 967.5h12M205 974.5h12M187 986.5h8M187 994.5h3M204 1005.5h6M201 991.5h12M179 983.5h3M175 965.5h8M169 943.5h5M173 948.5h8M193 999.5h12M193 981.5h4M179 995.5h4M200 970.5h8M201 1001.5h8M176 999.5h4M192 966.5h5M174 946.5h8M184 961.5h10M169 963.5h4M171 977.5h8M195 983.5h8M189 970.5h12M186 996.5h5M169 982.5h12M197 995.5h6M192 973.5h5M400 646.5h4M409 691.5h5M372 670.5h6M382 684.5h4M388 648.5h5M388 653.5h6M399 658.5h12M372 656.5h3M389 685.5h5M398 678.5h3M383 671.5h3M394 657.5h8M408 695.5h10M370 642.5h3M402 678.5h5M369 693.5h4M372 655.5h4M397 661.5h5M382 666.5h12M368 671.5h5M398 675.5h6M382 686.5h12M393 689.5h6M388 688.5h8M394 648.5h8M373 642.5h12M397 683.5h12M399 645.5h8M391 652.5h4M389 697.5h12M390 678.5h8M386 663.5h8M395 661.5h8M387 691.5h10M387 690.5h4M379 671.5h5M383 678.5h3M378 648.5h10M403 679.5h12M402 656.5h10M397 652.5h6M375 665.5h3M382 664.5h4M385 646.5h4M382 686.5h12M407 700.5h5M393 645.5h4M381 680.5h8M387 691.5h12M408 661.5h4M378 674.5h6M383 656.5h5M395 699.5h10M397 695.5h10M395 665.5h3M386 685.5h4M381 659.5h8M412 770.5h5M394 900.5h5M380 862.5h5M401 898.5h3M393 726.5h5M405 924.5h10M386 876.5h10M378 951.5h10M393 729.5h4M399 786.5h10M394 964.5h12M386 903.5h10M399 777.5h8M389 720.5h12M403 793.5h10M377 837.5h4M377 722.5h12M399 829.5h3M398 939.5h3M400 858.5h10M382 718.5h10M377 739.5h8M399 757.5h10M403 898.5h12M410 719.5h4M390 741.5h3M395 744.5h3M396 929.5h10M383 925.5h12M389 954.5h5M403 853.5h5M408 970.5h8M413 925.5h4M381 886.5h12M393 865.5h5M396 772.5h12M405 805.5h6M394 737.5h10M381 805.5h6M400 972.5h8M409 899.5h4M403 973.5h8M407 853.5h6M411 895.5h6M398 713.5h3M374 741.5h5M373 787.5h10M392 811.5h3M406 774.5h8M388 848.5h6M376 961.5h5M379 911.5h6M388 796.5h10M380 774.5h8M396 823.5h3M398 855.5h8M408 859.5h12M395 837.5h8M411 775.5h4M385 859.5h6M390 819.5h8M407 956.5h6M385 875.5h6M371 945.5h10M372 969.5h12M385 942.5h10M389 934.5h10M383 888.5h8M384 791.5h3M388 783.5h8M396 737.5h12M380 816.5h3M383 714.5h3M391 857.5h5M382 841.5h10M539 846.5h4M567 802.5h8M571 859.5h3M535 766.5h8M558 893.5h4M579 750.5h4M575 747.5h6M558 729.5h4M564 817.5h6M535 722.5h5M556 879.5h6M568 768.5h3M534 722.5h5M551 770.5h8M574 717.5h10M536 801.5h3M575 768.5h3M541 932.5h3M581 897.5h3M537 943.5h8M581 889.5h3M562 778.5h6M568 902.5h5M568 748.5h12M569 937.5h5M550 857.5h8M551 937.5h12M560 891.5h8M545 912.5h12M578 918.5h6M576 900.5h10M568 945.5h6M545 735.5h3M576 828.5h6M571 736.5h5M557 937.5h5M548 858.5h4M554 724.5h10M573 927.5h12M578 741.5h8M580 731.5h3M563 805.5h12M546 901.5h12M534 894.5h10M560 893.5h10M562 814.5h8M538 745.5h12M534 753.5h4M560 721.5h6M572 896.5h10M577 825.5h6M543 883.5h4M562 891.5h12M570 763.5h10M573 729.5h3M564 730.5h10M563 945.5h8M555 732.5h3M540 803.5h12M538 874.5h3M550 827.5h10M542 937.5h5M571 722.5h4M555 831.5h4M558 757.5h5M561 727.5h5M545 864.5h8M549 749.5h8M554 895.5h10M556 862.5h8M574 923.5h3M564 757.5h8M573 856.5h5M559 779.5h5M575 837.5h5M568 885.5h3M556 786.5h8M549 760.5h6M555 889.5h3M557 767.5h6M571 856.5h5M546 726.5h6M559 798.5h3M543 814.5h12M550 760.5h3M572 767.5h8M574 727.5h6M538 861.5h8M552 926.5h3M536 767.5h4M538 832.5h12M550 846.5h12M545 753.5h12M564 900.5h10M570 724.5h4M578 813.5h5M554 909.5h3M548 823.5h10M570 906.5h3M550 870.5h5M551 904.5h4M574 756.5h8M558 851.5h12M546 907.5h5M562 762.5h12M534 927.5h10M569 940.5h3M557 819.5h5M554 941.5h10M557 740.5h8M562 733.5h10M533 826.5h6M556 927.5h5M575 944.5h5M546 887.5h3M547 723.5h5M549 845.5h12M558 881.5h8M545 860.5h3M577 742.5h4M575 859.5h12M567 825.5h10M574 942.5h10M533 852.5h3M557 765.5h5M576 837.5h12M535 874.5h8M555 766.5h6M571 847.5h5M569 823.5h12M576 869.5h3M572 812.5h3M535 830.5h10M536 801.5h12M545 911.5h3M574 779.5h10M576 830.5h5M549 863.5h3M567 944.5h5M568 893.5h3M577 756.5h4M551 726.5h5M571 889.5h12M544 942.5h10M564 826.5h6M545 730.5h12M580 873.5h4M560 935.5h8M556 814.5h3M565 861.5h12M548 799.5h5M536 748.5h5M558 774.5h10M549 839.5h10M569 852.5h12M553 924.5h12M557 760.5h6M544 872.5h4M575 844.5h4M536 751.5h3M548 896.5h4M542 765.5h4M570 812.5h8M565 757.5h4M552 918.5h3M542 883.5h5M561 870.5h8M556 899.5h3M568 866.5h10M536 934.5h5M534 806.5h4M569 725.5h8M576 928.5h3M534 731.5h12M570 742.5h10M563 790.5h3M572 764.5h4M574 858.5h10M537 895.5h12M575 934.5h10M535 817.5h8M555 890.5h10M541 835.5h6M536 891.5h12M546 774.5h4M565 777.5h8M567 845.5h5M542 784.5h12M578 855.5h5M554 774.5h3M554 791.5h3M547 756.5h4M566 805.5h6M545 932.5h8M568 719.5h8M547 826.5h3M810 717.5h10M819 750.5h10M826 711.5h8M815 686.5h12M833 761.5h3M804 684.5h10M801 675.5h8M818 757.5h4M804 713.5h10M833 714.5h10M835 699.5h6M800 697.5h5M823 670.5h12M810 727.5h8M805 729.5h10M830 771.5h12M832 673.5h3M822 732.5h8M817 730.5h4M807 693.5h10M821 703.5h3M802 678.5h8M838 671.5h6M800 706.5h5M817 760.5h5M812 763.5h8M810 732.5h6M826 742.5h4M833 766.5h8M803 717.5h3M833 784.5h8M810 778.5h5M814 677.5h4M805 765.5h12M811 821.5h6M824 913.5h8M814 890.5h3M828 921.5h12M811 871.5h5M814 868.5h3M829 865.5h6M798 812.5h3M811 912.5h5M815 807.5h4M826 863.5h4M805 798.5h3M808 876.5h3M805 899.5h8M829 914.5h6M813 891.5h8M810 856.5h10M838 925.5h3M820 943.5h8M831 908.5h6M798 898.5h4M831 895.5h10M1037 694.5h10M1037 717.5h12M1035 719.5h3M1034 712.5h6M1030 705.5h12M1031 720.5h5M1036 714.5h4M1038 699.5h8M1031 814.5h10M1044 817.5h3M1034 820.5h6M1042 816.5h6M1040 803.5h3M1035 802.5h10M1040 798.5h4M1038 808.5h8M1039 820.5h12M1036 826.5h10M1320 991.5h4M1312 945.5h10M1296 807.5h3M1305 907.5h8M1306 990.5h5M1314 834.5h6M1277 929.5h4M1306 911.5h5M1278 787.5h5M1315 838.5h12M1300 818.5h4M1312 792.5h8M1297 804.5h3M1302 920.5h12M1296 837.5h6M1293 900.5h8M1292 955.5h4M1312 827.5h10M1322 878.5h6M1294 937.5h4M1292 806.5h6M1311 814.5h8M1309 818.5h12M1314 819.5h5M1319 916.5h4M1296 967.5h4M1304 991.5h12M1321 880.5h6M1296 943.5h10M1318 981.5h10M1309 844.5h4M1322 941.5h5M1318 837.5h5M1321 935.5h3M1314 931.5h3M1321 928.5h5M1312 828.5h12M1317 926.5h4M1248 909.5h3M1272 807.5h6M1258 951.5h10M1268 911.5h10M1268 861.5h8M1264 972.5h4M1267 813.5h6M1269 843.5h6M1271 844.5h5M1269 877.5h3M1259 952.5h3M1247 869.5h3M1256 815.5h10M1251 916.5h3M1268 902.5h5M1265 829.5h5M1266 911.5h12M1251 961.5h6M1250 850.5h8M1262 871.5h4M1253 911.5h12M1271 905.5h3M1266 896.5h4M1270 840.5h12M1247 801.5h4M1257 896.5h4M1270 923.5h5M1247 921.5h4M1267 806.5h6M1249 972.5h3M1265 861.5h5M1271 944.5h4M1262 874.5h8M1256 870.5h12M1269 954.5h12M1263 925.5h12M1266 957.5h10M1248 817.5h4M1260 820.5h10M1261 839.5h4M1249 854.5h12M1251 860.5h5M1252 922.5h4M1259 813.5h12M1250 854.5h8M1267 841.5h8M1257 952.5h5M1266 944.5h8M1274 930.5h4M1263 943.5h3M1256 959.5h5M1253 851.5h3M1250 824.5h10M1272 868.5h3M1252 891.5h4M1266 920.5h5M1273 868.5h4M1272 927.5h5M1343 889.5h5M1350 829.5h3M1328 832.5h12M1343 850.5h8M1328 949.5h5M1331 992.5h6M1333 918.5h5M1330 803.5h3M1343 906.5h4M1326 827.5h4M1340 915.5h4M1332 939.5h6M1338 822.5h12M1334 907.5h12M1327 888.5h4M1332 810.5h4M1346 972.5h8M1343 918.5h3M1348 970.5h5M1334 979.5h3M1332 818.5h5M1340 937.5h8M1330 927.5h5M1341 850.5h8M1345 979.5h5M1339 946.5h10M1326 816.5h10M1334 867.5h6M1328 828.5h4M1326 972.5h4M1343 852.5h6M1328 934.5h6M1332 901.5h6M1334 837.5h8M1329 932.5h3M1337 889.5h5M1330 918.5h6M1345 808.5h3M1332 952.5h12M1349 941.5h4M1331 946.5h8M1345 945.5h12M1670 843.5h5M1638 919.5h4M1649 791.5h8M1639 821.5h5M1672 651.5h10M1668 839.5h10M1633 730.5h10M1652 818.5h6M1648 919.5h12M1676 770.5h12M1653 861.5h10M1637 723.5h8M1646 825.5h6M1670 675.5h5M1639 786.5h5M1669 853.5h6M1638 713.5h10M1652 713.5h5M1678 734.5h6M1635 868.5h5M1658 704.5h8M1657 896.5h4M1643 798.5h6M1643 777.5h10M1653 812.5h12M1654 752.5h12M1631 653.5h6M1676 878.5h4M1669 750.5h12M1642 713.5h8M1663 789.5h12M1665 732.5h4M1670 754.5h12M1653 691.5h10M1663 892.5h3M1638 697.5h10M1630 861.5h10M1660 896.5h3M1657 919.5h4M1646 781.5h12M1649 889.5h5M1658 800.5h5M1649 845.5h8M1671 841.5h12M1671 848.5h12M1649 745.5h3M1656 884.5h4M1646 844.5h4M1663 795.5h3M1673 802.5h10M1657 855.5h4M1650 770.5h8M1668 810.5h3M1670 815.5h8M1631 768.5h3M1658 914.5h8M1677 874.5h6M1675 806.5h3M1666 701.5h12M1654 863.5h3M1655 773.5h3M1647 739.5h6M1663 778.5h10M1671 737.5h5M1646 790.5h6M1637 783.5h4M1665 761.5h3M1664 768.5h4M1648 858.5h6M1664 767.5h3M1656 657.5h4M1665 882.5h4M1640 812.5h3M1667 734.5h12M1636 696.5h12M1633 787.5h10M1643 688.5h3M1657 906.5h12M1645 698.5h12M1658 897.5h10M1667 861.5h5M1673 808.5h10M1632 846.5h4M1634 907.5h6M1658 823.5h12M1673 877.5h4M1664 834.5h10M1667 666.5h3M1663 763.5h10M1672 690.5h5M1646 826.5h5M1657 655.5h3M1669 790.5h12M1656 749.5h12M1657 771.5h4M1679 746.5h6M1655 673.5h12M1650 665.5h10M1643 904.5h6M1644 803.5h12M1641 760.5h4M1678 844.5h6M1674 905.5h5M1641 824.5h8M1666 829.5h12M1675 923.5h4M1679 900.5h5M1669 849.5h6M1663 846.5h10M1654 686.5h12M1670 704.5h10M1654 832.5h6M1641 697.5h12M1669 914.5h5M1661 848.5h12M1670 772.5h6M1674 761.5h8M1670 910.5h12M1643 851.5h12M1678 709.5h10M1662 863.5h10M1676 743.5h5M1646 689.5h8M1664 821.5h5M1673 698.5h10M1666 908.5h6M1661 729.5h3M1631 818.5h8M1659 789.5h3M1672 817.5h12M1650 819.5h10M1660 810.5h4M1672 795.5h5M1639 761.5h3M1661 646.5h3M1671 745.5h8M1634 882.5h3M1667 725.5h3M1643 919.5h6M1652 701.5h10M1647 648.5h6M1637 830.5h10M1634 671.5h8M1679 866.5h4M1678 664.5h5M1660 732.5h8M1651 863.5h6M1648 667.5h5M1649 755.5h5M1643 807.5h8M1653 825.5h8M1646 769.5h5M1656 820.5h4M1632 872.5h12M1675 782.5h3M1640 750.5h4M1639 721.5h12M1656 732.5h10M1640 727.5h5M1667 821.5h6M1653 853.5h10M1671 913.5h6M1642 760.5h10M1662 831.5h12M1681 820.5h3M1667 882.5h10M1650 763.5h12M1660 793.5h5M1638 743.5h4M1646 773.5h12M1677 651.5h10M1634 896.5h4M1667 804.5h4M1644 833.5h8M1639 744.5h3M1669 677.5h6M1657 799.5h4M1672 832.5h4M1640 801.5h8M1660 740.5h4M1665 753.5h3M1656 858.5h12M1636 649.5h12M1634 668.5h4M1666 758.5h4M1633 896.5h6M1672 887.5h4M1640 704.5h8M1666 963.5h12M1671 965.5h3M1645 961.5h3M1655 956.5h8M1646 969.5h3M1645 960.5h5M1634 963.5h8M1667 966.5h5M1649 951.5h5M1660 959.5h5M1659 961.5h12M1660 950.5h10M1646 950.5h4M1663 953.5h10M1644 980.5h8M1647 998.5h6M1630 988.5h10M1650 999.5h6M1643 987.5h3M1644 1001.5h6M1662 982.5h10M1644 993.5h4M1640 990.5h12M1633 983.5h4M1641 989.5h5" stroke="rgb(8,20,215)" stroke-width="1.2" opacity="0.85" fill="none" filter="url(#b3)"/>
<path d="M117 709.5h6M111 674.5h8M118 704.5h5M141 687.5h5M113 648.5h10M140 662.5h6M115 692.5h12M125 705.5h5M132 642.5h4M130 681.5h3M117 707.5h12M117 655.5h12M114 702.5h10M111 645.5h6M124 946.5h12M121 961.5h12M133 971.5h4M114 941.5h8M132 985.5h3M117 957.5h8M137 966.5h5M119 999.5h8M137 977.5h12M120 939.5h10M119 954.5h10M115 1001.5h6M129 994.5h12M116 953.5h3M128 941.5h6M140 954.5h6M134 965.5h3M142 982.5h3M177 984.5h8M180 975.5h8M209 1002.5h12M192 1005.5h5M204 967.5h3M206 985.5h5M191 973.5h4M190 946.5h8M171 992.5h4M174 965.5h10M183 955.5h6M178 961.5h8M376 754.5h8M388 973.5h10M384 940.5h5M371 940.5h6M395 934.5h8M372 952.5h10M388 792.5h3M378 961.5h3M387 934.5h10M401 729.5h5M387 818.5h6M387 947.5h4M401 925.5h6M390 929.5h3M398 937.5h3M389 726.5h5M392 856.5h6M376 948.5h8M395 842.5h6M408 864.5h12M385 771.5h5M384 727.5h5M389 742.5h4M391 747.5h12M372 760.5h8M391 916.5h3M394 811.5h8M403 891.5h5M404 739.5h6M384 926.5h10M376 964.5h6M379 860.5h8M391 930.5h3M382 719.5h6M387 949.5h4M382 940.5h3M396 703.5h8M379 709.5h12M376 766.5h5M405 919.5h4M382 798.5h8M391 941.5h6M386 869.5h10M381 923.5h8M401 747.5h4M377 968.5h12M401 854.5h10M382 866.5h4M541 733.5h8M539 766.5h12M552 907.5h5M559 932.5h6M550 906.5h8M575 848.5h4M534 760.5h4M799 785.5h10M824 706.5h10M798 684.5h10M813 714.5h3M831 789.5h12M816 784.5h10M818 769.5h12M819 729.5h4M819 724.5h4M816 776.5h4M824 699.5h4M816 704.5h12M829 766.5h6M820 752.5h6M799 774.5h3M806 782.5h3M831 690.5h12M817 727.5h3M810 731.5h4M819 782.5h3M831 727.5h5M801 701.5h10M798 784.5h5M802 681.5h10M802 913.5h6M833 886.5h12M814 894.5h12M823 842.5h8M807 928.5h5M821 894.5h5M832 810.5h10M811 928.5h8M807 829.5h6M809 850.5h6M837 852.5h5M821 854.5h4M830 915.5h8M808 825.5h12M820 909.5h8M818 842.5h5M821 904.5h10M832 934.5h3M813 797.5h10M806 881.5h4M814 798.5h4M811 901.5h6M831 944.5h3M829 803.5h10M808 831.5h10M1034 718.5h8M1032 695.5h3M1036 716.5h6M1042 795.5h4M1036 809.5h12M1035 798.5h4M1247 981.5h3M1262 966.5h3M1259 856.5h8M1256 811.5h6M1254 938.5h8M1270 847.5h10M1249 826.5h10M1248 914.5h4M1252 977.5h10M1261 801.5h4M1260 836.5h12M1265 804.5h6M1249 883.5h6M1265 822.5h6M1250 997.5h5M1263 800.5h8M1263 923.5h3M1268 874.5h6M1253 800.5h5M1249 809.5h4M1250 912.5h6M1248 817.5h6M1268 921.5h5M1247 810.5h4M1254 833.5h3M1328 807.5h10M1330 918.5h12M1339 911.5h8M1333 839.5h12M1342 812.5h12M1327 955.5h4M1345 978.5h4M1326 819.5h8M1333 810.5h3M1338 962.5h6M1336 891.5h6M1336 978.5h12M1336 834.5h6M1340 857.5h6M1330 831.5h8M1330 886.5h3M1327 803.5h10M1336 809.5h4M1334 801.5h10M1328 940.5h6M1333 996.5h6M1337 910.5h4M1343 953.5h5M1332 929.5h4" stroke="rgb(7,15,172)" stroke-width="1.2" opacity="0.85" fill="none" filter="url(#b3)"/>
<path d="M169 657.5h4M193 650.5h6M161 671.5h4M193 645.5h5M173 651.5h10M185 671.5h5M195 651.5h4M195 645.5h8M189 650.5h10M188 657.5h3M205 645.5h3M184 647.5h12M163 661.5h3M168 664.5h3M169 652.5h4M171 709.5h3M162 711.5h3M203 713.5h5M204 699.5h3M177 716.5h5M168 706.5h4M188 697.5h10M177 716.5h12M165 703.5h4M205 708.5h8M163 768.5h3M162 758.5h2M171 772.5h3M194 742.5h10M180 762.5h6M184 763.5h5M208 780.5h3M164 736.5h3M166 740.5h4M169 779.5h4M164 754.5h2M173 744.5h10M203 762.5h12M191 772.5h3M187 777.5h12M179 748.5h3M171 757.5h3M183 750.5h5M163 767.5h4M177 739.5h10M209 761.5h6M171 748.5h3M207 762.5h6M195 750.5h4M186 769.5h5M168 746.5h2M161 754.5h5M167 736.5h3M164 738.5h3M192 779.5h4M174 777.5h12M187 815.5h8M162 827.5h3M172 796.5h3M200 821.5h4M191 830.5h6M186 833.5h6M192 815.5h12M205 831.5h8M164 835.5h3M163 836.5h2M174 841.5h10M166 835.5h3M183 838.5h3M171 834.5h4M167 816.5h3M166 806.5h4M161 802.5h4M150 824.5h3M170 825.5h3M166 794.5h2M188 803.5h4M177 811.5h10M167 828.5h3M161 802.5h3M168 837.5h3M174 792.5h3M155 811.5h3M196 813.5h6M201 826.5h8M164 828.5h3M187 845.5h6M169 810.5h2M146 796.5h10M185 873.5h8M185 873.5h5M183 869.5h8M170 875.5h2M183 865.5h5M163 866.5h4M170 873.5h2M173 866.5h2M193 868.5h6M166 877.5h3M188 863.5h3M165 879.5h4M182 881.5h8M190 866.5h8M181 867.5h5M197 878.5h4M167 865.5h2M185 921.5h8M197 905.5h4M176 916.5h8M169 929.5h3M209 908.5h3M191 925.5h6M166 905.5h2M184 903.5h3M179 917.5h8M162 926.5h3M200 911.5h3M206 916.5h3M174 913.5h5M163 898.5h3M161 901.5h4M197 914.5h3M160 909.5h6M203 912.5h6M206 902.5h6M208 921.5h3M175 899.5h12M208 923.5h8M160 920.5h4M164 899.5h2M183 899.5h8M190 905.5h3M175 926.5h12M163 984.5h4M167 979.5h2M167 952.5h4M166 940.5h2M166 981.5h4M168 1002.5h2M167 998.5h2M162 954.5h4M164 998.5h3M1288 854.5h2M1288 901.5h2M1308 802.5h4M1284 912.5h2M1314 920.5h8M1316 982.5h12M1282 902.5h2M1322 921.5h3M1315 836.5h3M1314 802.5h4M1322 996.5h3M1310 907.5h4M1287 832.5h2M1318 929.5h10M1290 936.5h4M1312 988.5h4M1321 812.5h6M1309 984.5h8M1292 938.5h2M1310 871.5h6M1292 911.5h8M1322 792.5h3M1294 956.5h3M1284 904.5h2M1303 955.5h12M1276 867.5h6M1310 887.5h5M1282 998.5h3M1314 825.5h8M1290 916.5h3M1321 906.5h4M1315 996.5h8M1299 981.5h6M1309 941.5h10M1304 854.5h4M1298 954.5h6M1296 795.5h12M1320 877.5h5M1312 987.5h6M1300 902.5h6M1318 916.5h4M1322 787.5h3M1319 854.5h4M1315 882.5h5M1309 915.5h12M1277 1005.5h8M1293 836.5h12M1276 815.5h3M1318 825.5h5M1316 846.5h12M1305 913.5h10M1319 834.5h4M1289 961.5h3M1318 996.5h4M1309 830.5h12M1311 796.5h12M1278 833.5h2M1316 926.5h6M1315 913.5h5M1280 886.5h4M1286 817.5h3M1287 996.5h3M1283 862.5h3M1290 811.5h3M1280 905.5h3M1322 940.5h3M1308 954.5h5M1312 873.5h6M1282 917.5h2M1302 831.5h6M1319 818.5h10M1304 835.5h10M1312 899.5h12M1316 986.5h4M1308 907.5h4M1288 825.5h2M1284 888.5h3M1278 974.5h10M1298 819.5h6M1302 959.5h3M1306 854.5h12M1284 934.5h4M1286 833.5h2M1277 991.5h12M1311 815.5h5M1299 821.5h6M1294 902.5h3M1284 935.5h3M1291 925.5h3M1310 835.5h5M1312 931.5h3M1288 791.5h4M1293 977.5h8M1316 931.5h12M1305 794.5h10M1283 931.5h4M1292 825.5h4M1310 911.5h10M1286 956.5h4M1289 1004.5h3M1309 808.5h8M1300 874.5h4M1291 999.5h3M1281 829.5h3M1303 799.5h10M1294 793.5h8M1298 958.5h10M1295 874.5h10M1307 946.5h3M1295 840.5h4M1294 818.5h4M1298 801.5h5M1312 997.5h12M1298 887.5h6M1299 813.5h10M1314 993.5h6M1309 901.5h10M1296 817.5h6M1312 1004.5h5M1302 822.5h12M1307 860.5h3M1319 933.5h5M1298 986.5h8M1291 891.5h4M1311 918.5h8M1314 917.5h12M1279 993.5h3M1313 896.5h12M1318 852.5h3M1308 839.5h5M1317 954.5h4M1281 861.5h3M1297 920.5h8M1286 925.5h3M1313 968.5h10M1294 970.5h5M1300 799.5h6M1286 827.5h4M1288 969.5h3M1279 858.5h2M1280 853.5h2M1282 915.5h2M1315 984.5h6M1307 979.5h10M1291 993.5h4M1297 903.5h12M1294 908.5h6M1293 994.5h5M1307 850.5h4M1276 934.5h10M1280 990.5h4M1319 967.5h8M1281 935.5h4M1309 971.5h8M1293 798.5h6M1283 904.5h3M1301 860.5h8M1313 831.5h5M1287 880.5h2M1317 791.5h4M1312 861.5h8M1309 833.5h4M1314 845.5h5M1319 936.5h8M1304 877.5h4M1318 933.5h5M1294 959.5h8M1287 1000.5h3M1313 813.5h12M1316 878.5h10M1293 924.5h8M1319 832.5h4M1313 877.5h12M1289 864.5h3M1321 883.5h3M1285 915.5h4M1283 893.5h3M1293 904.5h6M1285 797.5h2M1299 921.5h5M1309 878.5h12M1286 913.5h3M1301 846.5h12M1295 802.5h12M1313 799.5h6M1297 906.5h6M1277 918.5h12M1278 864.5h5M1315 823.5h12M1318 819.5h3M1305 921.5h6M1297 883.5h8M1289 787.5h2M1284 971.5h2M1289 857.5h2M1291 805.5h4M1321 958.5h4M1289 980.5h3M1287 979.5h4M1279 811.5h3M1282 812.5h3M1291 793.5h4M1290 996.5h4M1320 845.5h4M1303 843.5h8M1311 901.5h10M1305 986.5h8M1312 879.5h3M1283 836.5h2M1321 972.5h4M1281 839.5h3M1289 946.5h2M1298 849.5h12M1310 861.5h6M1302 892.5h4M1311 849.5h4M1276 819.5h8M1298 1000.5h3M1311 845.5h6M1277 799.5h12M1286 965.5h4M1277 869.5h12M1295 970.5h4M1288 927.5h2M1286 879.5h4M1285 873.5h3M1298 979.5h12M1321 970.5h5M1290 909.5h3M1314 871.5h12M1291 914.5h4M1301 792.5h12M1302 890.5h8M1284 882.5h2M1290 820.5h3M1282 1003.5h4M1317 898.5h12M1284 794.5h2M1307 955.5h3M1311 940.5h8M1278 880.5h12M1284 843.5h2M1287 817.5h2M1317 807.5h8M1286 853.5h3M1298 812.5h10M1283 958.5h2M1278 879.5h3M1304 854.5h12M1316 865.5h12M1308 859.5h8M1322 896.5h5M1298 872.5h12M1288 837.5h2M1282 863.5h2M1299 918.5h12M1287 924.5h2M1313 977.5h8M1280 983.5h2M1318 915.5h10M1289 850.5h4" stroke="rgb(40,132,255)" stroke-width="1.2" opacity="0.85" fill="none" filter="url(#b3)"/>
<path d="M162 649.5h3M167 662.5h3M166 661.5h3M162 642.5h4M167 710.5h4M162 691.5h2M165 695.5h4M170 690.5h2M164 705.5h4M165 691.5h2M161 778.5h4M166 754.5h4M170 757.5h4M167 747.5h4M168 758.5h3M165 777.5h3M164 768.5h2M162 746.5h4M163 746.5h4M161 762.5h3M165 767.5h4M167 819.5h2M169 815.5h2M164 830.5h3M167 795.5h2M164 869.5h3M170 867.5h3M166 870.5h3M168 880.5h3M167 915.5h2M163 912.5h4M164 922.5h2M161 925.5h4M170 897.5h2M1279 857.5h3M1290 881.5h4M1309 927.5h4M1297 790.5h5M1293 928.5h10M1277 922.5h6M1278 957.5h4M1294 990.5h3M1289 948.5h4M1320 989.5h4M1277 823.5h12M1278 929.5h3M1280 891.5h4M1297 940.5h5M1302 966.5h8M1320 952.5h8M1315 934.5h5M1291 818.5h3M1311 884.5h5M1283 987.5h4M1283 1005.5h4M1279 882.5h4M1283 855.5h2M1319 1002.5h5M1287 897.5h4M1282 953.5h3M1279 930.5h4M1314 828.5h8M1300 890.5h3M1288 1000.5h3M1277 818.5h4M1293 948.5h3M1295 980.5h6M1305 936.5h5M1285 886.5h4M1284 852.5h4M1302 899.5h8M1317 984.5h5M1300 941.5h10M1290 887.5h3M1289 927.5h4M1282 820.5h4M1285 891.5h4M1282 856.5h2M1323 800.5h4M1288 892.5h3M1300 826.5h12M1295 815.5h10M1290 788.5h3M1287 855.5h2M1319 900.5h10M1282 980.5h2M1296 831.5h12M1286 844.5h2M1304 791.5h6M1282 801.5h2M1319 893.5h10M1279 964.5h4M1292 820.5h5M1283 814.5h4M1285 968.5h3M1300 833.5h6M1287 964.5h3M1286 866.5h4M1316 862.5h6M1297 903.5h4M1290 925.5h3M1313 811.5h10M1280 790.5h2M1279 957.5h4M1286 797.5h3M1276 859.5h4M1277 837.5h4M1283 827.5h2M1276 916.5h8M1299 869.5h3M1281 788.5h4M1292 844.5h2M1281 943.5h4M1284 803.5h2M1295 852.5h10M1278 860.5h3M1289 920.5h4M1281 845.5h4M1284 969.5h4M1292 988.5h3M1301 1001.5h8M1300 929.5h4M1287 932.5h3M1280 913.5h3M1285 837.5h4M1311 880.5h10M1281 860.5h3M1284 889.5h4M1307 844.5h10M1298 818.5h6M1281 969.5h3M1295 870.5h4M1299 825.5h6M1304 958.5h5M1282 848.5h3M1305 965.5h6M1285 830.5h2M1319 937.5h8M1281 857.5h3M1291 910.5h4M1290 902.5h4M1278 956.5h2M1319 1000.5h4M1304 803.5h10M1287 785.5h2M1281 915.5h3M1290 837.5h3M1292 841.5h4M1288 901.5h2M1278 787.5h2M1283 967.5h3M1307 808.5h5M1320 931.5h10M1291 957.5h2M1282 813.5h4M1314 915.5h12M1288 880.5h4M1284 975.5h4M1313 817.5h12" stroke="rgb(90,210,255)" stroke-width="1.2" opacity="0.85" fill="none" filter="url(#b3)"/>
<path d="M169 705.5h3M164 743.5h4M167 780.5h3M161 769.5h4M165 771.5h2M167 778.5h4M166 754.5h2M162 770.5h3M163 745.5h2M167 765.5h2M162 747.5h4M162 801.5h4M170 831.5h2M162 838.5h2M166 865.5h4M174 877.5h3M169 926.5h2M167 914.5h4M167 908.5h2M170 909.5h4M1288 972.5h4M1290 934.5h2M1285 787.5h2M1278 904.5h4M1292 864.5h2M1281 809.5h3M1288 930.5h2M1286 839.5h2M1287 968.5h4M1283 808.5h3M1284 881.5h2M1286 885.5h4M1290 982.5h3M1284 795.5h3M1290 979.5h3M1279 859.5h2M1285 818.5h2M1290 970.5h2M1282 927.5h4M1291 900.5h4M1280 952.5h4M1286 955.5h2M1282 942.5h4M1282 794.5h4M1286 953.5h3M1289 1003.5h4M1281 936.5h3M1281 876.5h2M1282 882.5h4M1282 969.5h3M1286 856.5h4M1288 837.5h2M1284 803.5h2M1286 972.5h4M1292 852.5h3M1283 975.5h3M1280 968.5h2M1290 912.5h3M1288 974.5h2M1279 929.5h4M1286 972.5h3M1288 885.5h2M1282 785.5h3M1284 981.5h3M1278 980.5h3M1282 996.5h2M1279 947.5h4M1284 953.5h2M1281 916.5h2M1292 898.5h4M1286 951.5h4M1286 860.5h4M1286 897.5h3M1289 839.5h2M1290 937.5h2M1279 846.5h2M1279 981.5h2M1285 822.5h4M1284 827.5h3M1280 829.5h2M1289 906.5h3M1280 848.5h3M1290 817.5h3M1288 895.5h3M1291 870.5h4M1291 901.5h2M1286 818.5h4M1287 913.5h4M1283 922.5h4M1278 965.5h3M1284 894.5h2M1284 900.5h4M1285 920.5h2M1286 993.5h3" stroke="rgb(170,250,255)" stroke-width="1.2" opacity="0.85" fill="none" filter="url(#b3)"/>
<path d="M1478 780v137M1481 777v144M1486 778v140M1496 771v144M1504 780v138M1510 771v142M1516 771v146M1521 777v143M1527 773v139M1533 777v135M1539 775v143M1549 778v141M1556 779v133M1561 780v135M1564 778v139M1568 776v145M1573 771v150M1583 779v138M1588 772v140M1598 771v147M1606 771v143M1611 777v144M1616 777v135M1623 777v143" stroke="rgb(7,15,172)" stroke-width="1.0" opacity="0.38" fill="none" filter="url(#b3)"/>
<path d="M1490 774v139M1501 776v143M1543 771v143M1552 773v139M1577 771v144M1580 772v140M1593 771v143M1602 772v148M1619 778v140" stroke="rgb(8,20,215)" stroke-width="1.0" opacity="0.38" fill="none" filter="url(#b3)"/>
<path d="M656.5 641V1006" stroke="#78c858" stroke-width="1" stroke-dasharray="2 2" opacity=".9"/>
<path d="M706.5 641V1006" stroke="#78c858" stroke-width="1" stroke-dasharray="2 2" opacity=".9"/>
</svg>
<div class="abs" style="left:0;top:295px;width:185px;height:70px;background:linear-gradient(90deg,rgba(0,0,0,.82) 0,rgba(0,0,0,.8) 80%,rgba(0,0,0,0) 100%)"></div>
<div class="abs mono" style="left:23.5px;top:305.5px;font-size:36.5px;line-height:44px;color:#fff;white-space:pre;transform-origin:0 0;transform:scaleY(.94)">23:22<span style="font-size:22.1px">:06</span></div>
<div class="abs" style="left:92px;top:299px;font-size:7px;line-height:8px;color:#eee;letter-spacing:-.2px">UTC</div>
<div class="abs" style="left:772px;top:300px;width:156px;height:58px;background:rgba(0,0,0,.72);border-radius:6px;filter:blur(3px)"></div>
<div class="abs mono" style="left:783px;top:305px;font-size:13.7px;line-height:18px;color:#f4f4f4;white-space:pre">Freq: 14.256 MHz</div>
<div class="abs mono" style="left:783px;top:328px;font-size:13.7px;line-height:18px;color:#f4f4f4;white-space:pre">Span:    ±48 kHz</div>
</div>
<div class="abs" style="left:1699px;top:78px;width:1px;height:955px;background:#8a8a8a"></div>
<div class="abs" style="left:1700px;top:77px;width:38px;height:956px;background:#000"></div>
<div class="abs" style="left:1700px;top:79px;width:38px;height:31px;background:linear-gradient(#262626 0,#3e3e3e 15.5px,#000 16px,#000 100%);border-bottom:1px solid #555"></div>
<div class="abs" style="left:1706px;top:89.5px;font-size:8px;letter-spacing:-.3px;color:#fff;line-height:10px">Low</div>
<svg class="abs" style="left:1723px;top:91.5px" width="8" height="7" viewBox="0 0 8 7"><path d="M0.3 0.5 H7.7 L4 6.8 Z" fill="#fff"/></svg>
<div class="abs" style="left:1700px;top:111px;width:38px;height:397px;background:#200003"></div>
<div class="abs" style="left:1713px;top:130px;width:5px;height:359px;border-radius:3px;background:linear-gradient(90deg,#4a3838,#6a5858 50%,#4a3838)"></div>
<svg class="abs" style="left:1719px;top:130px" width="11" height="360" viewBox="0 0 11 360"><defs><linearGradient id="wg" x1="0" y1="0" x2="0" y2="1"><stop offset="0" stop-color="#b4b4b4"/><stop offset=".5" stop-color="#807878"/><stop offset="1" stop-color="#4a3c3c"/></linearGradient></defs><path d="M0 0 H9.7 L1.2 358 H0 Z" fill="url(#wg)"/></svg>
<div class="abs" style="left:1706px;top:360px;width:26px;height:20px;border-radius:3px;background:#000;border:1px solid #8a8a8a"></div>
<div class="abs" style="left:1710px;top:369px;width:18px;height:1px;background:#8a8a8a"></div>
<div class="abs" style="left:1700px;top:508px;width:38px;height:28px;background:linear-gradient(#6a6a6a 0,#2a2a2a 13px,#000 14px,#000 100%);border-top:1px solid #9a9a9a;color:#fff;font-size:11px;line-height:28px;text-align:center">Auto</div>
<div class="abs" style="left:1702px;top:540px;width:34px;height:1px;background:#f4f4f4"></div>
<div class="abs" style="left:1702px;top:541px;width:34px;height:348px;background:linear-gradient(#ff0a8c 0.0px,#ff0070 19.0px,#ff0020 44.0px,#ff0000 56.0px,#ff4800 79.0px,#ff8c00 99.0px,#ffe000 121.0px,#e8ff00 131.0px,#70ff00 149.0px,#00f000 171.0px,#00e860 199.0px,#00e0c0 221.0px,#00c8ff 239.0px,#0070ff 259.0px,#0010ff 284.0px,#0000f0 299.0px,#000090 321.0px,#000030 339.0px,#000008 348.0px)"></div>
<div class="abs" style="left:1702px;top:889px;width:34px;height:1px;background:#f4f4f4"></div>
<div class="abs cbl" style="left:1705px;top:576px;color:#ffb0b0;background:rgba(0,0,0,.48)">-15</div>
<div class="abs cbl" style="left:1705px;top:622px;color:#ffc890;background:rgba(0,0,0,.48)">-30</div>
<div class="abs cbl" style="left:1705px;top:669px;color:#f0f080;background:rgba(0,0,0,.48)">-45</div>
<div class="abs cbl" style="left:1705px;top:715px;color:#a0ffa0;background:rgba(0,0,0,.48)">-60</div>
<div class="abs cbl" style="left:1705px;top:762px;color:#a0f0f0;background:rgba(0,0,0,.48)">-75</div>
<div class="abs cbl" style="left:1705px;top:808px;color:#b0c0ff;background:rgba(0,0,0,.48)">-90</div>
<div class="abs cbl" style="left:1705px;top:854px;color:#c0c8ff;background:rgba(0,0,0,.48)">-105</div>
<div class="abs cbl" style="left:1705px;top:901px;color:#ddd">-120</div>
<div class="abs cbl" style="left:1705px;top:947px;color:#ddd">-135</div>
<div class="abs cbl" style="left:1705px;top:994px;color:#ddd">-150</div>
<div class="abs" style="left:1738px;top:78px;width:1px;height:955px;background:#e4e4e4"></div>
<div class="abs" style="left:1739px;top:78px;width:4px;height:957px;background:#555"></div>
<div class="abs" style="left:1743px;top:78px;width:1px;height:956px;background:#eaeaea"></div>
<div class="abs" style="left:1744px;top:77px;width:176px;height:958px;background:#f0f0f0"></div>
<div class="abs" style="left:1743px;top:77px;width:177px;height:3px;background:#fafafa"></div>
<div class="abs" style="left:1744px;top:79.3px;width:175px;height:18.4px;background:#9c9e9d;color:#4c4c4c;font-size:12px;line-height:18px;padding-left:3px"><span style="display:inline-block;transform-origin:0 50%;transform:scaleX(.935)">Favourites</span></div>
<svg class="abs" style="left:1888px;top:86px" width="10" height="6" viewBox="0 0 10 6"><path d="M0.5 0.5 H9.5 L5 5.5 Z" fill="#555"/></svg>
<svg class="abs" style="left:1905px;top:83px" width="10" height="10" viewBox="0 0 10 10"><path d="M1 1 L9 9 M9 1 L1 9" stroke="#555" stroke-width="1.2"/></svg>
<div class="abs" style="left:1747px;top:102px;width:22px;height:21px;background:#e1e1e1;border:1px solid #adadad"></div>
<svg class="abs" style="left:1747px;top:102px" width="22" height="21" viewBox="0 0 22 22"><path d="M11 5.5 V16.5 M5.5 11 H16.5" stroke="#111" stroke-width="2"/></svg>
<div class="abs" style="left:1774px;top:102px;width:22px;height:21px;background:#e1e1e1;border:1px solid #adadad"></div>
<svg class="abs" style="left:1774px;top:102px" width="22" height="21" viewBox="0 0 22 22"><path d="M6 10 C6 6.5 10 5.5 13.5 7.5" fill="none" stroke="#111" stroke-width="1.8"/><path d="M12 3.8 L16.5 8 L11 9.8 Z" fill="#111"/><path d="M16 12 C16 15.5 12 16.5 8.5 14.5" fill="none" stroke="#111" stroke-width="1.8"/><path d="M10 18.2 L5.5 14 L11 12.2 Z" fill="#111"/></svg>
<div class="abs" style="left:1801px;top:102px;width:22px;height:21px;background:#e1e1e1;border:1px solid #adadad"></div>
<svg class="abs" style="left:1801px;top:102px" width="22" height="21" viewBox="0 0 22 22"><circle cx="5.5" cy="12" r="1.55" fill="#111"/><circle cx="11" cy="12" r="1.55" fill="#111"/><circle cx="16.5" cy="12" r="1.55" fill="#111"/></svg>
<div class="abs" style="left:1843px;top:102px;width:22px;height:21px;background:#e1e1e1;border:1px solid #adadad"></div>
<svg class="abs" style="left:1843px;top:102px" width="22" height="21" viewBox="0 0 22 22"><path d="M4 5 H9 L10.5 6.5 H16 V15.5 H4 Z" fill="#e8b84a"/><path d="M6.2 9 H18.5 L16 15.8 H4 Z" fill="#f6d070" stroke="#d8a838" stroke-width=".6"/></svg>
<div class="abs" style="left:1870px;top:102px;width:22px;height:21px;background:#e1e1e1;border:1px solid #adadad"></div>
<svg class="abs" style="left:1870px;top:102px" width="22" height="21" viewBox="0 0 22 22"><circle cx="9.5" cy="9" r="4.6" fill="none" stroke="#222" stroke-width="1.3"/><path d="M13 12.5 L17.5 17" stroke="#222" stroke-width="2.2" stroke-linecap="round"/><path d="M9.5 6.6 V11.4 M7.1 9 H11.9" stroke="#222" stroke-width="1.1"/></svg>
<div class="abs" style="left:1897px;top:102px;width:22px;height:21px;background:#e1e1e1;border:1px solid #adadad"></div>
<svg class="abs" style="left:1897px;top:102px" width="22" height="21" viewBox="0 0 22 22"><circle cx="9.5" cy="9" r="4.6" fill="none" stroke="#222" stroke-width="1.3"/><path d="M13 12.5 L17.5 17" stroke="#222" stroke-width="2.2" stroke-linecap="round"/><path d="M7.1 9 H11.9" stroke="#222" stroke-width="1.1"/></svg>
<div class="abs" style="left:1744px;top:127px;width:175px;height:906px;background:#fff;border-left:1px solid #828282;border-top:1px solid #8c8f92"></div>
<svg class="abs" style="left:1752px;top:134.5px" width="8" height="10" viewBox="0 0 8 10"><path d="M1.5 1 L6 5 L1.5 9" fill="none" stroke="#999" stroke-width="1.7"/></svg>
<svg class="abs" style="left:1767px;top:130.2px" width="17" height="16" viewBox="0 0 17 16"><rect x="1" y="1" width="15" height="13.5" fill="#fbfbfb" stroke="#9a9a9a" stroke-width="1"/><rect x="1.5" y="1.5" width="14" height="3" fill="#dcdcdc"/><circle cx="7.8" cy="8" r="1.2" fill="#2a6fd0"/><circle cx="7.8" cy="11" r="1.6" fill="#5a9ae8"/></svg>
<div class="abs mono tr" style="left:1788px;top:130.0px">Time</div>
<svg class="abs" style="left:1751px;top:153.0px" width="10" height="8" viewBox="0 0 10 8"><path d="M1 1.5 L5 6 L9 1.5" fill="none" stroke="#333" stroke-width="1.6"/></svg>
<svg class="abs" style="left:1767px;top:148.2px" width="17" height="16" viewBox="0 0 17 16"><rect x="1" y="1" width="15" height="13.5" fill="#fbfbfb" stroke="#9a9a9a" stroke-width="1"/><rect x="1.5" y="1.5" width="14" height="3" fill="#dcdcdc"/><circle cx="7.8" cy="8" r="1.2" fill="#2a6fd0"/><circle cx="7.8" cy="11" r="1.6" fill="#5a9ae8"/></svg>
<div class="abs mono tr" style="left:1788px;top:148.0px">Amateur :: HF</div>
<svg class="abs" style="left:1786.8px;top:166.0px" width="14.5" height="15" viewBox="0 0 16 16" preserveAspectRatio="none"><path d="M8 0.6 L10.3 5.4 L15.5 6.1 L11.7 9.8 L12.7 15.1 L8 12.5 L3.3 15.1 L4.3 9.8 L0.5 6.1 L5.7 5.4 Z" fill="#ffd958" stroke="#f0b428" stroke-width=".8"/><path d="M8 2.6 L9.5 6.3 L12.8 6.8 L8 8.2 L3.5 6.8 L6.5 6.3 Z" fill="#fff0a0"/></svg>
<div class="abs mono tr" style="left:1807px;top:166.0px">630m</div>
<svg class="abs" style="left:1771px;top:188.5px" width="8" height="10" viewBox="0 0 8 10"><path d="M1.5 1 L6 5 L1.5 9" fill="none" stroke="#999" stroke-width="1.7"/></svg>
<svg class="abs" style="left:1786px;top:183.5px" width="16" height="16" viewBox="0 0 16 16"><defs><linearGradient id="fg1" x1="0" y1="0" x2="1" y2="1"><stop offset="0" stop-color="#fff0b0"/><stop offset=".55" stop-color="#f0c858"/><stop offset="1" stop-color="#c89018"/></linearGradient></defs><path d="M1.5 2.5 H6.5 L7.5 4 H14.5 V13.5 H1.5 Z" fill="#e8d8a0" stroke="#6a6a6a" stroke-width=".9"/><rect x="1.5" y="5" width="13" height="8.5" fill="url(#fg1)" stroke="#5a5a5a" stroke-width=".9"/></svg>
<div class="abs mono tr" style="left:1807px;top:184.0px">160m</div>
<svg class="abs" style="left:1770px;top:207.0px" width="10" height="8" viewBox="0 0 10 8"><path d="M1 1.5 L5 6 L9 1.5" fill="none" stroke="#333" stroke-width="1.6"/></svg>
<svg class="abs" style="left:1786px;top:201.5px" width="16" height="16" viewBox="0 0 16 16"><defs><linearGradient id="fg2" x1="0" y1="0" x2="1" y2="1"><stop offset="0" stop-color="#fff0b0"/><stop offset=".55" stop-color="#f0c858"/><stop offset="1" stop-color="#c89018"/></linearGradient></defs><path d="M1.5 2.5 H6.5 L7.5 4 H14.5 V13.5 H1.5 Z" fill="#e8d8a0" stroke="#6a6a6a" stroke-width=".9"/><rect x="1.5" y="5" width="13" height="8.5" fill="url(#fg2)" stroke="#5a5a5a" stroke-width=".9"/></svg>
<div class="abs mono tr" style="left:1807px;top:202.0px">80m</div>
<svg class="abs" style="left:1805.8px;top:220.0px" width="14.5" height="15" viewBox="0 0 16 16" preserveAspectRatio="none"><path d="M8 0.6 L10.3 5.4 L15.5 6.1 L11.7 9.8 L12.7 15.1 L8 12.5 L3.3 15.1 L4.3 9.8 L0.5 6.1 L5.7 5.4 Z" fill="#ffd958" stroke="#f0b428" stroke-width=".8"/><path d="M8 2.6 L9.5 6.3 L12.8 6.8 L8 8.2 L3.5 6.8 L6.5 6.3 Z" fill="#fff0a0"/></svg>
<div class="abs mono tr" style="left:1826px;top:220.0px">3.5 - 4.0</div>
<svg class="abs" style="left:1786.8px;top:238.0px" width="14.5" height="15" viewBox="0 0 16 16" preserveAspectRatio="none"><path d="M8 0.6 L10.3 5.4 L15.5 6.1 L11.7 9.8 L12.7 15.1 L8 12.5 L3.3 15.1 L4.3 9.8 L0.5 6.1 L5.7 5.4 Z" fill="#ffd958" stroke="#f0b428" stroke-width=".8"/><path d="M8 2.6 L9.5 6.3 L12.8 6.8 L8 8.2 L3.5 6.8 L6.5 6.3 Z" fill="#fff0a0"/></svg>
<div class="abs mono tr" style="left:1807px;top:238.0px">60m</div>
<svg class="abs" style="left:1770px;top:261.0px" width="10" height="8" viewBox="0 0 10 8"><path d="M1 1.5 L5 6 L9 1.5" fill="none" stroke="#333" stroke-width="1.6"/></svg>
<svg class="abs" style="left:1786px;top:255.5px" width="16" height="16" viewBox="0 0 16 16"><defs><linearGradient id="fg3" x1="0" y1="0" x2="1" y2="1"><stop offset="0" stop-color="#fff0b0"/><stop offset=".55" stop-color="#f0c858"/><stop offset="1" stop-color="#c89018"/></linearGradient></defs><path d="M1.5 2.5 H6.5 L7.5 4 H14.5 V13.5 H1.5 Z" fill="#e8d8a0" stroke="#6a6a6a" stroke-width=".9"/><rect x="1.5" y="5" width="13" height="8.5" fill="url(#fg3)" stroke="#5a5a5a" stroke-width=".9"/></svg>
<div class="abs mono tr" style="left:1807px;top:256.0px">40m</div>
<svg class="abs" style="left:1805.8px;top:274.0px" width="14.5" height="15" viewBox="0 0 16 16" preserveAspectRatio="none"><path d="M8 0.6 L10.3 5.4 L15.5 6.1 L11.7 9.8 L12.7 15.1 L8 12.5 L3.3 15.1 L4.3 9.8 L0.5 6.1 L5.7 5.4 Z" fill="#ffd958" stroke="#f0b428" stroke-width=".8"/><path d="M8 2.6 L9.5 6.3 L12.8 6.8 L8 8.2 L3.5 6.8 L6.5 6.3 Z" fill="#fff0a0"/></svg>
<div class="abs mono tr" style="left:1826px;top:274.0px">7.0 - 7.3</div>
<svg class="abs" style="left:1786.8px;top:292.0px" width="14.5" height="15" viewBox="0 0 16 16" preserveAspectRatio="none"><path d="M8 0.6 L10.3 5.4 L15.5 6.1 L11.7 9.8 L12.7 15.1 L8 12.5 L3.3 15.1 L4.3 9.8 L0.5 6.1 L5.7 5.4 Z" fill="#ffd958" stroke="#f0b428" stroke-width=".8"/><path d="M8 2.6 L9.5 6.3 L12.8 6.8 L8 8.2 L3.5 6.8 L6.5 6.3 Z" fill="#fff0a0"/></svg>
<div class="abs mono tr" style="left:1807px;top:292.0px">30m</div>
<svg class="abs" style="left:1770px;top:315.0px" width="10" height="8" viewBox="0 0 10 8"><path d="M1 1.5 L5 6 L9 1.5" fill="none" stroke="#333" stroke-width="1.6"/></svg>
<svg class="abs" style="left:1786px;top:309.5px" width="16" height="16" viewBox="0 0 16 16"><defs><linearGradient id="fg4" x1="0" y1="0" x2="1" y2="1"><stop offset="0" stop-color="#fff0b0"/><stop offset=".55" stop-color="#f0c858"/><stop offset="1" stop-color="#c89018"/></linearGradient></defs><path d="M1.5 2.5 H6.5 L7.5 4 H14.5 V13.5 H1.5 Z" fill="#e8d8a0" stroke="#6a6a6a" stroke-width=".9"/><rect x="1.5" y="5" width="13" height="8.5" fill="url(#fg4)" stroke="#5a5a5a" stroke-width=".9"/></svg>
<div class="abs mono tr" style="left:1807px;top:310.0px">20m</div>
<div class="abs" style="left:1803px;top:326.4px;width:111px;height:18px;background:#d9d9d9"></div>
<div class="abs" style="left:1804px;top:328.0px;width:17px;height:16px;background:#fff"></div>
<svg class="abs" style="left:1805.8px;top:328.0px" width="14.5" height="15" viewBox="0 0 16 16" preserveAspectRatio="none"><path d="M8 0.6 L10.3 5.4 L15.5 6.1 L11.7 9.8 L12.7 15.1 L8 12.5 L3.3 15.1 L4.3 9.8 L0.5 6.1 L5.7 5.4 Z" fill="#ffd958" stroke="#f0b428" stroke-width=".8"/><path d="M8 2.6 L9.5 6.3 L12.8 6.8 L8 8.2 L3.5 6.8 L6.5 6.3 Z" fill="#fff0a0"/></svg>
<div class="abs mono tr" style="left:1826px;top:328.0px">14.0 - 14.35</div>
<svg class="abs" style="left:1786.8px;top:346.0px" width="14.5" height="15" viewBox="0 0 16 16" preserveAspectRatio="none"><path d="M8 0.6 L10.3 5.4 L15.5 6.1 L11.7 9.8 L12.7 15.1 L8 12.5 L3.3 15.1 L4.3 9.8 L0.5 6.1 L5.7 5.4 Z" fill="#ffd958" stroke="#f0b428" stroke-width=".8"/><path d="M8 2.6 L9.5 6.3 L12.8 6.8 L8 8.2 L3.5 6.8 L6.5 6.3 Z" fill="#fff0a0"/></svg>
<div class="abs mono tr" style="left:1807px;top:346.0px">17m</div>
<svg class="abs" style="left:1770px;top:369.0px" width="10" height="8" viewBox="0 0 10 8"><path d="M1 1.5 L5 6 L9 1.5" fill="none" stroke="#333" stroke-width="1.6"/></svg>
<svg class="abs" style="left:1786px;top:363.5px" width="16" height="16" viewBox="0 0 16 16"><defs><linearGradient id="fg5" x1="0" y1="0" x2="1" y2="1"><stop offset="0" stop-color="#fff0b0"/><stop offset=".55" stop-color="#f0c858"/><stop offset="1" stop-color="#c89018"/></linearGradient></defs><path d="M1.5 2.5 H6.5 L7.5 4 H14.5 V13.5 H1.5 Z" fill="#e8d8a0" stroke="#6a6a6a" stroke-width=".9"/><rect x="1.5" y="5" width="13" height="8.5" fill="url(#fg5)" stroke="#5a5a5a" stroke-width=".9"/></svg>
<div class="abs mono tr" style="left:1807px;top:364.0px">15m</div>
<svg class="abs" style="left:1805.8px;top:382.0px" width="14.5" height="15" viewBox="0 0 16 16" preserveAspectRatio="none"><path d="M8 0.6 L10.3 5.4 L15.5 6.1 L11.7 9.8 L12.7 15.1 L8 12.5 L3.3 15.1 L4.3 9.8 L0.5 6.1 L5.7 5.4 Z" fill="#ffd958" stroke="#f0b428" stroke-width=".8"/><path d="M8 2.6 L9.5 6.3 L12.8 6.8 L8 8.2 L3.5 6.8 L6.5 6.3 Z" fill="#fff0a0"/></svg>
<div class="abs mono tr" style="left:1826px;top:382.0px">21.0 - 21.45</div>
<svg class="abs" style="left:1786.8px;top:400.0px" width="14.5" height="15" viewBox="0 0 16 16" preserveAspectRatio="none"><path d="M8 0.6 L10.3 5.4 L15.5 6.1 L11.7 9.8 L12.7 15.1 L8 12.5 L3.3 15.1 L4.3 9.8 L0.5 6.1 L5.7 5.4 Z" fill="#ffd958" stroke="#f0b428" stroke-width=".8"/><path d="M8 2.6 L9.5 6.3 L12.8 6.8 L8 8.2 L3.5 6.8 L6.5 6.3 Z" fill="#fff0a0"/></svg>
<div class="abs mono tr" style="left:1807px;top:400.0px">12m</div>
<svg class="abs" style="left:1770px;top:423.0px" width="10" height="8" viewBox="0 0 10 8"><path d="M1 1.5 L5 6 L9 1.5" fill="none" stroke="#333" stroke-width="1.6"/></svg>
<svg class="abs" style="left:1786px;top:417.5px" width="16" height="16" viewBox="0 0 16 16"><defs><linearGradient id="fg6" x1="0" y1="0" x2="1" y2="1"><stop offset="0" stop-color="#fff0b0"/><stop offset=".55" stop-color="#f0c858"/><stop offset="1" stop-color="#c89018"/></linearGradient></defs><path d="M1.5 2.5 H6.5 L7.5 4 H14.5 V13.5 H1.5 Z" fill="#e8d8a0" stroke="#6a6a6a" stroke-width=".9"/><rect x="1.5" y="5" width="13" height="8.5" fill="url(#fg6)" stroke="#5a5a5a" stroke-width=".9"/></svg>
<div class="abs mono tr" style="left:1807px;top:418.0px">10m</div>
<svg class="abs" style="left:1805.8px;top:436.0px" width="14.5" height="15" viewBox="0 0 16 16" preserveAspectRatio="none"><path d="M8 0.6 L10.3 5.4 L15.5 6.1 L11.7 9.8 L12.7 15.1 L8 12.5 L3.3 15.1 L4.3 9.8 L0.5 6.1 L5.7 5.4 Z" fill="#ffd958" stroke="#f0b428" stroke-width=".8"/><path d="M8 2.6 L9.5 6.3 L12.8 6.8 L8 8.2 L3.5 6.8 L6.5 6.3 Z" fill="#fff0a0"/></svg>
<div class="abs mono tr" style="left:1826px;top:436.0px">28.0 - 28.1</div>
<svg class="abs" style="left:1805.8px;top:454.0px" width="14.5" height="15" viewBox="0 0 16 16" preserveAspectRatio="none"><path d="M8 0.6 L10.3 5.4 L15.5 6.1 L11.7 9.8 L12.7 15.1 L8 12.5 L3.3 15.1 L4.3 9.8 L0.5 6.1 L5.7 5.4 Z" fill="#ffd958" stroke="#f0b428" stroke-width=".8"/><path d="M8 2.6 L9.5 6.3 L12.8 6.8 L8 8.2 L3.5 6.8 L6.5 6.3 Z" fill="#fff0a0"/></svg>
<div class="abs mono tr" style="left:1826px;top:454.0px">28.0 - 28.2</div>
<svg class="abs" style="left:1805.8px;top:472.0px" width="14.5" height="15" viewBox="0 0 16 16" preserveAspectRatio="none"><path d="M8 0.6 L10.3 5.4 L15.5 6.1 L11.7 9.8 L12.7 15.1 L8 12.5 L3.3 15.1 L4.3 9.8 L0.5 6.1 L5.7 5.4 Z" fill="#ffd958" stroke="#f0b428" stroke-width=".8"/><path d="M8 2.6 L9.5 6.3 L12.8 6.8 L8 8.2 L3.5 6.8 L6.5 6.3 Z" fill="#fff0a0"/></svg>
<div class="abs mono tr" style="left:1826px;top:472.0px">28.0 - 28.3</div>
<svg class="abs" style="left:1805.8px;top:490.0px" width="14.5" height="15" viewBox="0 0 16 16" preserveAspectRatio="none"><path d="M8 0.6 L10.3 5.4 L15.5 6.1 L11.7 9.8 L12.7 15.1 L8 12.5 L3.3 15.1 L4.3 9.8 L0.5 6.1 L5.7 5.4 Z" fill="#ffd958" stroke="#f0b428" stroke-width=".8"/><path d="M8 2.6 L9.5 6.3 L12.8 6.8 L8 8.2 L3.5 6.8 L6.5 6.3 Z" fill="#fff0a0"/></svg>
<div class="abs mono tr" style="left:1826px;top:490.0px">28.0 - 28.6</div>
<svg class="abs" style="left:1752px;top:512.5px" width="8" height="10" viewBox="0 0 8 10"><path d="M1.5 1 L6 5 L1.5 9" fill="none" stroke="#999" stroke-width="1.7"/></svg>
<svg class="abs" style="left:1767px;top:508.2px" width="17" height="16" viewBox="0 0 17 16"><rect x="1" y="1" width="15" height="13.5" fill="#fbfbfb" stroke="#9a9a9a" stroke-width="1"/><rect x="1.5" y="1.5" width="14" height="3" fill="#dcdcdc"/><circle cx="7.8" cy="8" r="1.2" fill="#2a6fd0"/><circle cx="7.8" cy="11" r="1.6" fill="#5a9ae8"/></svg>
<div class="abs mono tr" style="left:1788px;top:508.0px">Amateur :: VHF</div>
<div class="abs" style="left:1745px;top:1015px;width:174px;height:17px;background:#f0f0f0"></div>
<div class="abs" style="left:1762px;top:1015px;width:130px;height:17px;background:#cdcdcd"></div>
<svg class="abs" style="left:1749px;top:1019px" width="8" height="10" viewBox="0 0 8 10"><path d="M6 1 L2 5 L6 9" fill="none" stroke="#505050" stroke-width="1.5"/></svg>
<svg class="abs" style="left:1906px;top:1019px" width="8" height="10" viewBox="0 0 8 10"><path d="M2 1 L6 5 L2 9" fill="none" stroke="#505050" stroke-width="1.5"/></svg>
<div class="abs" style="left:0;top:1006px;width:1699px;height:1px;background:#b0b0b0"></div>
<div class="abs" style="left:0;top:1007px;width:1699px;height:26px;background:linear-gradient(#1c1c1c 0,#222 6px,#000 12px,#000 100%)"></div>
<div class="abs" style="left:416px;top:1007px;width:776px;height:26px;background:linear-gradient(#505050 0,#444 8px,#323232 16px,#2a2a2a 100%);overflow:hidden">
<svg class="abs" style="left:0;top:0" width="776" height="26" viewBox="0 0 776 26"><defs><linearGradient id="yg" x1="0" y1="0" x2="0" y2="1"><stop offset="0" stop-color="#c8c020" stop-opacity=".0"/><stop offset=".5" stop-color="#c8c020" stop-opacity=".55"/><stop offset="1" stop-color="#d8d020" stop-opacity=".95"/></linearGradient><filter id="yb" x="-5%" y="-50%" width="110%" height="200%"><feGaussianBlur stdDeviation="6 1.6"/></filter></defs><path d="M0 27 L0 25.5 C100 24 250 17 387 14 C520 17 660 24 776 25.5 L776 27 Z" fill="url(#yg)" filter="url(#yb)" opacity=".42"/><path d="M100 27 C250 21 330 18 387 17 C450 18 560 22 700 27 Z" fill="#a8a020" opacity=".3" filter="url(#yb)"/></svg>
</div>
<div class="abs" style="left:415px;top:1007px;width:1px;height:26px;background:#f0f0f0"></div>
<div class="abs" style="left:1192px;top:1007px;width:1px;height:26px;background:#f0f0f0"></div>
<div class="abs" style="left:802.5px;top:1007px;width:1.6px;height:26px;background:#d0c820"></div>
<svg class="abs" style="left:0;top:1007px" width="1699" height="8" viewBox="0 0 1699 8"><path d="M27.5 0V6M43.5 0V3.5M60.5 0V3.5M76.5 0V3.5M92.5 0V3.5M108.5 0V3.5M124.5 0V3.5M140.5 0V3.5M157.5 0V3.5M173.5 0V3.5M189.5 0V6M205.5 0V3.5M221.5 0V3.5M238.5 0V3.5M254.5 0V3.5M270.5 0V3.5M286.5 0V3.5M302.5 0V3.5M318.5 0V3.5M335.5 0V3.5M351.5 0V6M367.5 0V3.5M383.5 0V3.5M399.5 0V3.5M415.5 0V3.5M432.5 0V3.5M448.5 0V3.5M464.5 0V3.5M480.5 0V3.5M496.5 0V3.5M512.5 0V6M529.5 0V3.5M545.5 0V3.5M561.5 0V3.5M577.5 0V3.5M593.5 0V3.5M610.5 0V3.5M626.5 0V3.5M642.5 0V3.5M658.5 0V3.5M674.5 0V6M690.5 0V3.5M707.5 0V3.5M723.5 0V3.5M739.5 0V3.5M755.5 0V3.5M771.5 0V3.5M787.5 0V3.5M804.5 0V3.5M820.5 0V3.5M836.5 0V6M852.5 0V3.5M868.5 0V3.5M885.5 0V3.5M901.5 0V3.5M917.5 0V3.5M933.5 0V3.5M949.5 0V3.5M965.5 0V3.5M982.5 0V3.5M998.5 0V6M1014.5 0V3.5M1030.5 0V3.5M1046.5 0V3.5M1062.5 0V3.5M1079.5 0V3.5M1095.5 0V3.5M1111.5 0V3.5M1127.5 0V3.5M1143.5 0V3.5M1160.5 0V6M1176.5 0V3.5M1192.5 0V3.5M1208.5 0V3.5M1224.5 0V3.5M1240.5 0V3.5M1257.5 0V3.5M1273.5 0V3.5M1289.5 0V3.5M1305.5 0V3.5M1321.5 0V6M1337.5 0V3.5M1354.5 0V3.5M1370.5 0V3.5M1386.5 0V3.5M1402.5 0V3.5M1418.5 0V3.5M1434.5 0V3.5M1451.5 0V3.5M1467.5 0V3.5M1483.5 0V6M1499.5 0V3.5M1515.5 0V3.5M1532.5 0V3.5M1548.5 0V3.5M1564.5 0V3.5M1580.5 0V3.5" stroke="#8c8c8c" stroke-width="1" fill="none"/></svg>
<div class="abs nl" style="left:159.0px;top:1016px">14.180</div>
<div class="abs nl" style="left:320.8px;top:1016px">14.200</div>
<div class="abs nl" style="left:482.5px;top:1016px">14.220</div>
<div class="abs nl" style="left:644.2px;top:1016px">14.240</div>
<div class="abs nl" style="left:806.0px;top:1016px">14.260</div>
<div class="abs nl" style="left:967.8px;top:1016px">14.280</div>
<div class="abs nl" style="left:1129.5px;top:1016px">14.300</div>
<div class="abs nl" style="left:1291.2px;top:1016px">14.320</div>
<div class="abs nl" style="left:1453.0px;top:1016px">14.340</div>
<div class="abs" style="left:0;top:1007px;width:27px;height:26px;background:#e6e6e6;border:1px solid #fafafa;border-right:1px solid #9a9a9a"></div>
<svg class="abs" style="left:5px;top:1011px" width="18" height="18" viewBox="0 0 18 18"><circle cx="9" cy="9" r="7.3" fill="#f4f4f4" stroke="#3a3a3a" stroke-width="1.3"/><path d="M9 5.5 V12.5 L5 9 Z M13 5.5 V12.5 L9 9 Z" fill="#333"/></svg>
<div class="abs" style="left:1582px;top:1008px;width:38px;height:25px;background:#e4e4e4;border:1px solid #f8f8f8;border-right-color:#a8a8a8;border-bottom-color:#a8a8a8"></div>
<div class="abs" style="left:1621px;top:1008px;width:51px;height:25px;background:#e4e4e4;border:1px solid #f8f8f8;border-right-color:#a8a8a8;border-bottom-color:#a8a8a8"></div>
<div class="abs" style="left:1673px;top:1008px;width:26px;height:25px;background:#e4e4e4;border:1px solid #f8f8f8;border-right-color:#a8a8a8;border-bottom-color:#a8a8a8"></div>
<div class="abs" style="left:1581px;top:1007px;width:118px;height:1px;background:#d8d8d8"></div>
<div class="abs" style="left:1581px;top:1007px;width:1px;height:26px;background:#d8d8d8"></div>
<svg class="abs" style="left:1591px;top:1011px" width="18" height="16" viewBox="0 0 18 16"><path d="M9 5 L12.5 1.2" stroke="#444" stroke-width="1"/><rect x="1" y="5" width="16" height="8.5" fill="#f4f4f4" stroke="#444" stroke-width="1"/><path d="M2.5 7 H15.5 M2.5 9 H15.5 M4 11.3 H14" stroke="#444" stroke-width="1" stroke-dasharray="1.4 .8"/></svg>
<div class="abs" style="left:1629px;top:1013px;font-size:12px;line-height:14px;color:#222">x2</div>
<svg class="abs" style="left:1657px;top:1016px" width="6" height="9" viewBox="0 0 6 9"><path d="M0.5 0.5 L5 4.5 L0.5 8.5 Z" fill="#333"/></svg>
<svg class="abs" style="left:1677px;top:1011px" width="18" height="18" viewBox="0 0 18 18"><circle cx="9" cy="9" r="7.3" fill="#f4f4f4" stroke="#3a3a3a" stroke-width="1.3"/><path d="M5 5.5 V12.5 L9 9 Z M9 5.5 V12.5 L13 9 Z" fill="#333"/></svg>
<div class="abs" style="left:0;top:1033px;width:1744px;height:1px;background:#e8e8e8"></div>
<div class="abs" style="left:0;top:1034px;width:1744px;height:1px;background:#8a8a8a"></div>
<div class="abs" style="left:0;top:1035px;width:1920px;height:23px;background:linear-gradient(#5a5a5a 0,#4c4c4c 8px,#383838 12px,#343434 100%)"></div>
<div class="abs" style="left:9px;top:1039.5px;font-size:10.4px;line-height:14px;color:#fff;white-space:nowrap;transform-origin:0 0;transform:scaleX(1.06)">Hermes-Lite, BW = 96 kHz</div>
<div class="abs" style="left:1441px;top:1035px;width:479px;height:23px;background:linear-gradient(#7e7e7e 0,#6c6c6c 9px,#505050 12px,#4a4a4a 100%);border-left:1px solid #2a2a2a"></div>
<div class="abs" style="left:1463px;top:1039.5px;font-size:10.4px;line-height:14px;color:#fff;white-space:nowrap;transform-origin:0 0;transform:scaleX(1.000)">CPU: 4.0%</div>
<div class="abs" style="left:1612px;top:1039.5px;font-size:10.4px;line-height:14px;color:#fff;white-space:nowrap;transform-origin:0 0;transform:scaleX(1.010)">GPU: 3.3%</div>
<div class="abs" style="left:1768px;top:1039.5px;font-size:10.4px;line-height:14px;color:#fff;white-space:nowrap;transform-origin:0 0;transform:scaleX(1.080)">Audio: 19ms</div>
<div class="abs" style="left:1528px;top:1041px;width:70px;height:11px;border-radius:2px;border:1px solid #3a3a3a;background:linear-gradient(#c8ccd8,#e8ecf4 50%,#d4d8e4)"></div>
<div class="abs" style="left:1684px;top:1041px;width:70px;height:11px;border-radius:2px;border:1px solid #3a3a3a;background:linear-gradient(#c8ccd8,#e8ecf4 50%,#d4d8e4)"></div>
<div class="abs" style="left:1845px;top:1041px;width:70px;height:11px;border-radius:2px;border:1px solid #3a3a3a;background:linear-gradient(#c8ccd8,#e8ecf4 50%,#d4d8e4)"></div>
<div class="abs" style="left:1847px;top:1043px;width:23px;height:7px;background:linear-gradient(#9ad048,#5aa818)"></div>
</body>
</html>
